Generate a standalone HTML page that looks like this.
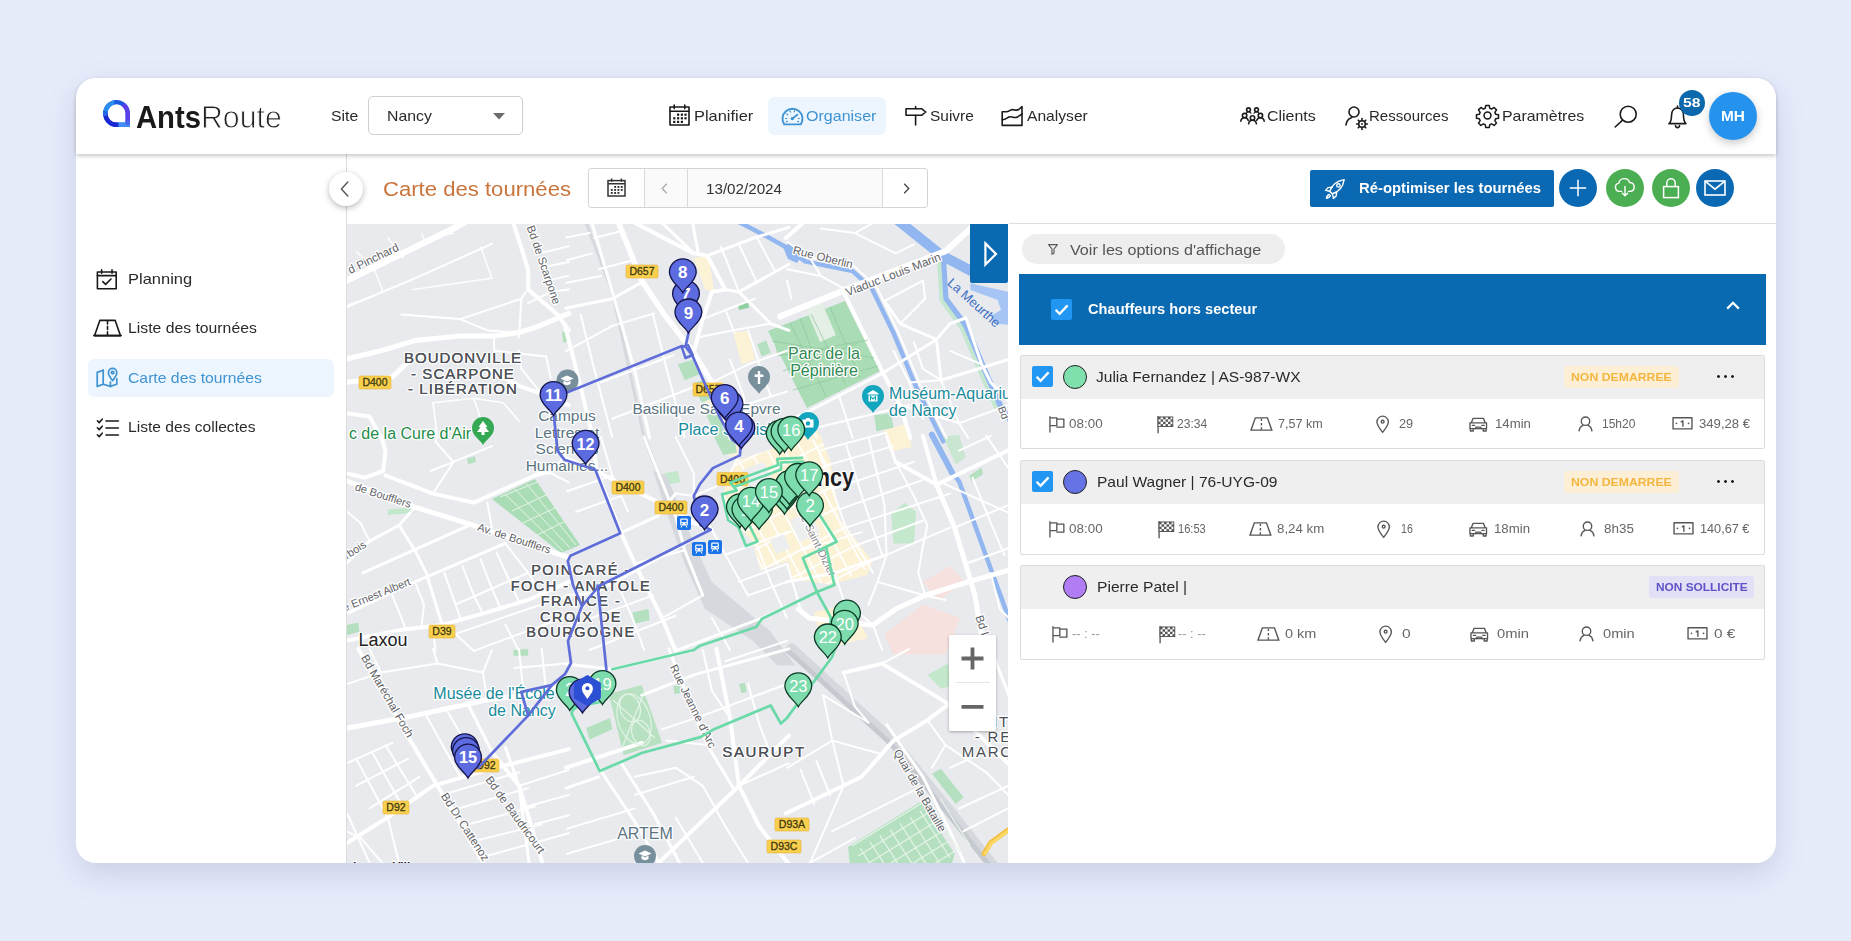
<!DOCTYPE html>
<html lang="fr"><head><meta charset="utf-8"><title>AntsRoute - Carte des tournées</title>
<style>
*{box-sizing:border-box;margin:0;padding:0}
html,body{width:1851px;height:941px;overflow:hidden}
body{font-family:"Liberation Sans",sans-serif;background:#e7ecfb;position:relative;color:#222}
.abs,.t,svg.i{position:absolute}
.t{white-space:nowrap;line-height:20px;height:20px;transform-origin:0 50%;display:block}
.card{left:76px;top:78px;width:1700px;height:785px;border-radius:20px;background:#fff;box-shadow:0 11px 30px rgba(105,118,155,.23)}
.hdr{left:76px;top:78px;width:1700px;height:76px;border-radius:20px 20px 0 0;background:#fff;box-shadow:0 2px 4px rgba(0,0,0,.22)}
svg.i{overflow:visible}
.k{fill:none;stroke:#1a1a1a;stroke-width:1.6;stroke-linecap:round;stroke-linejoin:round}
.g{fill:none;stroke:#555;stroke-width:1.4;stroke-linecap:round;stroke-linejoin:round}
.circ{border-radius:50%}
</style></head><body>

<div class="abs card"></div>
<!-- sidebar border -->
<div class="abs" style="left:346px;top:154px;width:1px;height:709px;background:#dcdcdc"></div>
<!-- toolbar bottom line (right part) -->
<div class="abs" style="left:1009px;top:223px;width:767px;height:1px;background:#dedede"></div>

<!-- ===== HEADER ===== -->
<div class="abs hdr"></div>
<!-- logo -->
<svg class="i" style="left:103px;top:100.4px" width="26.8" height="26.9" viewBox="0 0 28.6 28" preserveAspectRatio="none">
 <path d="M14.3 2.2 A11.8 11.8 0 1 0 14.3 25.8 L26.4 25.8 L26.4 14 A11.9 11.9 0 0 0 14.3 2.2 Z" fill="none" stroke="#1d5ae0" stroke-width="4.6" stroke-linejoin="miter"/>
 <path d="M2.5 14 A11.8 11.8 0 0 1 12 2.4" fill="none" stroke="#2b8ff2" stroke-width="4.6"/>
 <path d="M2.5 13.2 A11.8 11.8 0 0 0 14.3 25.8 L16.5 25.8" fill="none" stroke="#1b28d4" stroke-width="4.6"/>
 <path d="M2.4 11.2 A11.800 11.800 0 0 0 2.700 16.500" fill="none" stroke="#2468e6" stroke-width="4.600"/>
 <path d="M21.5 4.6 A11.9 11.9 0 0 1 26.4 14 L26.4 23" fill="none" stroke="#5b3fe8" stroke-width="4.6"/>
 <path d="M16.5 25.8 L28.7 25.8" fill="none" stroke="#3f8cf6" stroke-width="4.6"/>
 <path d="M26.4 21 L26.4 25.800" fill="none" stroke="#4b62ee" stroke-width="4.600"/>
</svg>
<!-- site select -->
<div class="abs" style="left:368px;top:96px;width:155px;height:39px;border:1px solid #cfcfcf;border-radius:5px;background:#fff"></div>
<svg class="i" style="left:493px;top:113px" width="12" height="7" viewBox="0 0 12 7"><path d="M0 0h12L6 6.5z" fill="#6b6b6b"/></svg>

<!-- Planifier icon (calendar) -->
<svg class="i" style="left:669px;top:104px" width="21" height="22" viewBox="0 0 21 22">
 <rect x="1" y="3" width="19" height="18" class="k" stroke-width="1.8"/>
 <path d="M1 7.2h19M5.2 1v3.6M15.8 1v3.6" class="k" stroke-width="1.8"/>
 <g fill="#1a1a1a"><rect x="8" y="9.6" width="2.2" height="2.2"/><rect x="11.8" y="9.6" width="2.2" height="2.2"/><rect x="15.4" y="9.6" width="2.2" height="2.2"/>
 <rect x="4.2" y="13.2" width="2.2" height="2.2"/><rect x="8" y="13.2" width="2.2" height="2.2"/><rect x="11.8" y="13.2" width="2.2" height="2.2"/><rect x="15.4" y="13.2" width="2.2" height="2.2"/>
 <rect x="4.2" y="16.8" width="2.2" height="2.2"/><rect x="8" y="16.8" width="2.2" height="2.2"/><rect x="11.8" y="16.8" width="2.2" height="2.2"/></g>
</svg>
<!-- Organiser pill -->
<div class="abs" style="left:768px;top:97px;width:118px;height:38px;border-radius:6px;background:#edf6fe"></div>
<svg class="i" style="left:781px;top:106px" width="23" height="20" viewBox="0 0 23 20">
 <path d="M3.2 18.4 A10 10 0 1 1 19.8 18.4 Z" fill="none" stroke="#3f93d2" stroke-width="1.9" stroke-linejoin="round"/>
 <path d="M11.5 12.4 L16.3 8.8" stroke="#3f93d2" stroke-width="1.9" stroke-linecap="round"/>
 <circle cx="11.3" cy="12.6" r="1.7" fill="#3f93d2"/>
 <g stroke="#3f93d2" stroke-width="1.2" stroke-linecap="round"><path d="M4.6 12.5h1.2M5.8 8l1 .7M9 4.9l.5 1.1M13.6 4.8l-.4 1.1M18.4 12.5h-1.2M17.6 15.8l-1-.4M5.4 15.8l1-.4"/></g>
</svg>
<!-- Suivre icon (signpost) -->
<svg class="i" style="left:905px;top:106px" width="23" height="20" viewBox="0 0 23 20">
 <path d="M1 2.8h15.8l4 3.2-4 3.2H1z" class="k" stroke-width="1.8" stroke-linejoin="miter"/>
 <path d="M10.6 0.6v2M10.6 9.4v9.6" class="k" stroke-width="1.8"/>
</svg>
<!-- Analyser icon -->
<svg class="i" style="left:1001px;top:105px" width="23" height="22" viewBox="0 0 23 22">
 <path d="M1.2 8.2v12.2h19.8V1.6l-3.3 2.9c-2.6 2-5.2-1-8 .6-1.7 1-2.8 1.6-3.9 1.6H1.200z" class="k" stroke-width="1.8" stroke-linejoin="miter"/>
 <path d="M1.2 14.6c2.6.6 4.500-1.6 6.7-2.600 3-1.400 5.300 1.700 8 .2 1.800-1 3.300-2.200 5.100-3.200" class="k" stroke-width="1.8"/>
</svg>
<!-- Clients icon -->
<svg class="i" style="left:1240px;top:107px" width="25" height="18" viewBox="0 0 25 18">
 <g class="k" stroke-width="1.4">
 <circle cx="8.5" cy="2.800" r="1.900"/><circle cx="16.5" cy="2.800" r="1.900"/>
 <circle cx="4.600" cy="8.600" r="2.200"/><path d="M0.800 14.200c.4-2.300 1.900-3.400 3.800-3.400s3.100.9 3.600 2.400"/>
 <circle cx="20.400" cy="8.600" r="2.200"/><path d="M24.200 14.200c-.4-2.300-1.900-3.400-3.800-3.400s-3.100.9-3.600 2.400"/>
 <circle cx="12.500" cy="11" r="2.200"/><path d="M8.600 16.800c.4-2.300 2-3.500 3.900-3.500s3.500 1.200 3.900 3.500"/>
 <path d="M6 6.200c.5-.9 1.400-1.400 2.500-1.400s2 .5 2.500 1.400M14 6.200c.5-.9 1.400-1.400 2.500-1.400s2 .5 2.500 1.400" stroke-width="1.200"/>
 </g>
</svg>
<!-- Ressources icon -->
<svg class="i" style="left:1345px;top:106px" width="25" height="24" viewBox="0 0 25 24">
 <circle cx="9" cy="6" r="5" class="k" stroke-width="1.5"/>
 <path d="M1 19c.4-4 2.800-6.600 5.800-7.600" class="k" stroke-width="1.500"/>
 <circle cx="17" cy="18" r="3.300" class="k" stroke-width="1.500"/><circle cx="17" cy="18" r="0.900" fill="#1a1a1a"/>
 <g stroke="#1a1a1a" stroke-width="1.600" stroke-linecap="round"><path d="M17 12.600v1.600M17 21.800v1.600M11.600 18h1.600M20.800 18h1.600M13.200 14.200l1.100 1.100M19.700 20.700l1.100 1.100M13.200 21.800l1.100-1.100M19.700 15.300l1.100-1.100"/></g>
</svg>
<!-- Parametres gear -->
<svg class="i" style="left:1476px;top:104px" width="23" height="23" viewBox="0 0 24 24">
 <path class="k" stroke-width="1.900" d="M10.200 1.500h3.600l.6 3 1.900.8 2.600-1.700 2.500 2.500-1.700 2.600.8 1.900 3 .6v3.600l-3 .6-.8 1.900 1.700 2.600-2.500 2.500-2.600-1.700-1.900.8-.6 3h-3.600l-.6-3-1.900-.8-2.600 1.700-2.500-2.500 1.700-2.600-.8-1.900-3-.6v-3.600l3-.6.8-1.900-1.700-2.600 2.500-2.500 2.600 1.700 1.900-.8z"/>
 <circle cx="12" cy="12" r="3.600" class="k" stroke-width="1.900"/>
</svg>
<!-- search -->
<svg class="i" style="left:1614px;top:105px" width="24" height="23" viewBox="0 0 24 23">
 <circle cx="14.200" cy="9.200" r="8" class="k" stroke-width="1.700"/><path d="M8.600 15.200L1.200 22" class="k" stroke-width="1.700"/>
</svg>
<!-- bell -->
<svg class="i" style="left:1668px;top:105px" width="19" height="24" viewBox="0 0 19 24">
 <path d="M1 18.600h17c-2-1.800-2.500-3.400-2.500-8.200 0-4.400-2.400-7.400-6-7.400s-6 3-6 7.400c0 4.800-.5 6.400-2.500 8.200z" class="k" stroke-width="1.700"/>
 <path d="M9.500 1v2M7.500 20.600a2 2 0 0 0 4 0" class="k" stroke-width="1.700"/>
</svg>
<div class="abs circ" style="left:1679px;top:90px;width:26px;height:26px;background:#0b68ad"></div>
<!-- avatar -->
<div class="abs circ" style="left:1709px;top:92px;width:48px;height:48px;background:#2593ee;box-shadow:0 3px 8px rgba(0,0,0,.22)"></div>

<!-- ===== SIDEBAR ===== -->
<div class="abs" style="left:88px;top:359px;width:246px;height:38px;border-radius:6px;background:#edf6fe"></div>
<!-- planning icon -->
<svg class="i" style="left:96px;top:269px" width="22" height="21" viewBox="0 0 22 21">
 <rect x="1.400" y="3" width="18.800" height="16.800" class="k" stroke-width="1.800" stroke-linejoin="miter"/>
 <path d="M1.400 6.600h18.800M5.600 0.900v3.300M16 0.900v3.300" class="k" stroke-width="1.800"/>
 <path d="M6.800 12.600l2.800 2.800 5.400-5.400" class="k" stroke-width="1.800"/>
</svg>
<!-- road icon -->
<svg class="i" style="left:93px;top:319px" width="29" height="18" viewBox="0 0 29 18">
 <path d="M6.800 1.400h15.400l5.200 15.200H1.600z" class="k" stroke-width="1.800" stroke-linejoin="miter"/>
 <path d="M0.800 16.600h27.400" class="k" stroke-width="1.800"/>
 <path d="M14.500 2.400v2.600M14.500 7.400v3M14.500 12.800v3" class="k" stroke-width="1.800" stroke-linecap="butt"/>
</svg>
<!-- map icon (active) -->
<svg class="i" style="left:96px;top:366px" width="23" height="22" viewBox="0 0 23 22">
 <g fill="none" stroke="#3f93d2" stroke-width="1.700" stroke-linejoin="round" stroke-linecap="round">
 <path d="M7.200 4.200L1.200 6.400v14l6-2.200 7.200 2.200 6.400-2.200v-5.400"/>
 <path d="M7.200 4.200v14"/><path d="M14.400 16v4.400" />
 <path d="M16.600 14.600c-2.600-3-4.200-5.600-4.200-8a4.200 4.200 0 0 1 8.400 0c0 2.400-1.600 5-4.200 8z"/>
 <circle cx="16.600" cy="6.600" r="1.300"/>
 </g>
</svg>
<!-- checklist icon -->
<svg class="i" style="left:96px;top:418px" width="23" height="20" viewBox="0 0 23 20">
 <g class="k" stroke-width="1.900" stroke-linecap="butt"><path d="M10 3h12.400M10 10h12.400M10 17h12.400"/></g>
 <g class="k" stroke-width="1.800"><path d="M1.400 2.800l1.800 1.800 3-3.400M1.400 9.800l1.800 1.800 3-3.400M1.400 16.800l1.800 1.800 3-3.400"/></g>
</svg>

<!-- ===== TOOLBAR ===== -->
<div class="abs circ" style="left:329px;top:172px;width:34px;height:34px;background:#fff;box-shadow:0 2px 6px rgba(0,0,0,.28)"></div>
<svg class="i" style="left:340px;top:181px" width="9" height="16" viewBox="0 0 9 16"><path d="M7.800 1L1.400 8l6.400 7" class="g" stroke="#555" stroke-width="1.500"/></svg>
<!-- date group -->
<div class="abs" style="left:588px;top:168px;width:340px;height:40px;border:1px solid #d4d4d4;border-radius:3px;background:#fff"></div>
<div class="abs" style="left:644px;top:169px;width:239px;height:38px;background:#fafafa;border-left:1px solid #d9d9d9;border-right:1px solid #d9d9d9"></div>
<div class="abs" style="left:687px;top:169px;width:1px;height:38px;background:#d9d9d9"></div>
<svg class="i" style="left:607px;top:178px" width="19" height="19" viewBox="0 0 19 19">
 <rect x="1" y="2.600" width="17" height="15.400" fill="none" stroke="#333" stroke-width="1.500"/>
 <path d="M1 5.800h17M4.600 0.600v3.200M14.400 0.600v3.200" stroke="#333" stroke-width="1.500" fill="none"/>
 <g fill="#333"><rect x="7.200" y="8" width="1.900" height="1.900"/><rect x="10.500" y="8" width="1.900" height="1.900"/><rect x="13.800" y="8" width="1.900" height="1.900"/>
 <rect x="3.800" y="11" width="1.900" height="1.900"/><rect x="7.200" y="11" width="1.900" height="1.900"/><rect x="10.500" y="11" width="1.900" height="1.900"/><rect x="13.800" y="11" width="1.900" height="1.900"/>
 <rect x="3.800" y="14" width="1.900" height="1.900"/><rect x="7.200" y="14" width="1.900" height="1.900"/><rect x="10.500" y="14" width="1.900" height="1.900"/></g>
</svg>
<svg class="i" style="left:661px;top:183px" width="7" height="11" viewBox="0 0 7 11"><path d="M5.800 0.800L1.200 5.500l4.600 4.700" fill="none" stroke="#aaa" stroke-width="1.300"/></svg>
<svg class="i" style="left:903px;top:183px" width="7" height="11" viewBox="0 0 7 11"><path d="M1.200 0.800L5.800 5.500l-4.600 4.700" fill="none" stroke="#444" stroke-width="1.300"/></svg>

<!-- re-optimiser button -->
<div class="abs" style="left:1310px;top:170px;width:244px;height:37px;border-radius:2px;background:#0a69b2"></div>
<svg class="i" style="left:1324px;top:178px" width="22" height="22" viewBox="0 0 22 22">
 <g fill="none" stroke="#fff" stroke-width="1.400" stroke-linejoin="round" stroke-linecap="round">
 <path d="M8.200 15.800l-2.400-2.400c1.800-5.800 6-10.400 14.400-11.800-1.400 8.400-6 12.600-12 14.200z"/>
 <path d="M8.400 9.200L4 9.600 1.600 12.400l4 .8M12.600 13.600l-.4 4.400-2.800 2.400-.8-4"/>
 <circle cx="14.400" cy="7.400" r="1.700"/>
 <path d="M5.400 16.400c-1.400.4-2.600 1.800-3 4 2.200-.4 3.600-1.600 4-3"/>
 </g>
</svg>
<div class="abs circ" style="left:1559px;top:169px;width:38px;height:38px;background:#0a69b2"></div>
<svg class="i" style="left:1569px;top:179px" width="18" height="18" viewBox="0 0 18 18"><path d="M9 0.800v16.400M0.800 9h16.400" stroke="#fff" stroke-width="1.500" fill="none"/></svg>
<div class="abs circ" style="left:1606px;top:169px;width:38px;height:38px;background:#4cae52"></div>
<svg class="i" style="left:1614px;top:178px" width="22" height="20" viewBox="0 0 22 20">
 <g fill="none" stroke="#fff" stroke-width="1.400" stroke-linecap="round" stroke-linejoin="round">
 <path d="M7.600 13.400H5.400a4.200 4.200 0 0 1-.6-8.300 5.600 5.600 0 0 1 10.800-.6 4.500 4.500 0 0 1 1 8.900h-2.200"/>
 <path d="M11 8.400v9.200M8.400 15.200L11 17.800l2.600-2.600"/></g>
</svg>
<div class="abs circ" style="left:1652px;top:169px;width:38px;height:38px;background:#4cae52"></div>
<svg class="i" style="left:1662px;top:177px" width="18" height="22" viewBox="0 0 18 22">
 <g fill="none" stroke="#fff" stroke-width="1.500" stroke-linejoin="miter"><rect x="1.600" y="9.600" width="14.800" height="11"/><path d="M4.800 9.600V6a4.200 4.200 0 0 1 8.400 0v3.600"/></g>
</svg>
<div class="abs circ" style="left:1696px;top:169px;width:38px;height:38px;background:#0a69b2"></div>
<svg class="i" style="left:1704px;top:180px" width="22" height="16" viewBox="0 0 22 16">
 <g fill="none" stroke="#fff" stroke-width="1.600" stroke-linejoin="miter"><rect x="1" y="1" width="20" height="14"/><path d="M1.400 1.400L11 9.200l9.600-7.800"/></g>
</svg>

<!-- ===== MAP ===== -->
<svg class="i" id="map" style="left:347px;top:224px;overflow:hidden" width="661" height="639" viewBox="347 224 661 639" font-family="Liberation Sans, sans-serif"><defs><filter id="zs" x="-20%" y="-10%" width="140%" height="120%"><feDropShadow dx="0" dy="1" stdDeviation="1.500" flood-color="#000" flood-opacity=".3"/></filter></defs><rect x="347" y="224" width="661" height="639" fill="#e8eaed"/>
<path d="M736.8 460.4 L778.0 447.0 L820.9 437.0 L830.3 460.4 L839.6 518.8 L872.4 560.9 L867.7 575.0 L830.3 584.3 L792.9 579.6 L788.2 560.9 L760.1 570.3 L753.1 542.2 L732.1 518.8 L722.7 495.5 L729.7 472.1Z" fill="#fcf2d5" />
<path d="M884.0 430.0 L905.0 424.0 L912.0 447.0 L890.0 452.0Z" fill="#fcf2d5" />
<path d="M814.0 612.0 L850.0 604.0 L868.0 638.0 L835.0 646.0 L820.0 636.0Z" fill="#fcf2d5" />
<path d="M693.8 258.0 L708.5 254.6 L714.1 291.9 L705.1 289.6Z" fill="#fcf2d5" />
<path d="M733.4 332.6 L748.1 330.4 L754.9 359.8 L741.3 364.3Z" fill="#fcf2d5" />
<path d="M780.0 437.0 L815.0 428.0 L822.0 437.0 L790.0 447.0Z" fill="#fcf2d5" />
<path d="M700.0 388.0 L722.0 380.0 L745.0 440.0 L736.0 460.0 L722.0 450.0Z" fill="#f6f0dc" />
<path d="M922.9 581.9 L950.0 566.1 L964.8 581.9 L938.7 600.5Z" fill="#f7e1df" />
<path d="M884.4 634.0 L922.9 604.6 L960.2 618.2 L945.5 654.4 L893.4 654.4Z" fill="#f7e1df" />
<path d="M768.0 331.0 L845.0 301.0 L880.0 371.0 L807.0 408.0Z" fill="#aadcb6" />
<path d="M806.0 309.0 L822.0 303.0 L836.0 335.0 L820.0 342.0Z" fill="#e4efe6" />
<path d="M492.0 499.0 L535.0 479.0 L580.0 545.0 L561.0 553.0Z" fill="#aadcb6" />
<path d="M608.9 694.1 L641.7 685.1 L662.1 742.8 L623.6 755.3Z" fill="#b7e1c1" />
<path d="M586.2 728.1 L610.0 717.9 L612.3 729.2 L589.6 739.4Z" fill="#b4e0bf" />
<path d="M848.1 847.0 L920.6 801.7 L954.6 853.8 L950.0 871.9 L850.4 871.9Z" fill="#b4e0bf" />
<path d="M931.9 773.4 L941.0 768.9 L963.6 797.2 L955.7 804.0Z" fill="#b4e0bf" />
<path d="M927.4 674.9 L947.8 663.6 L951.2 686.2 L941.0 688.5Z" fill="#c3e8cb" />
<path d="M891.2 514.0 L904.8 502.7 L916.1 511.7 L913.8 543.4 L893.4 543.4Z" fill="#c3e8cb" />
<path d="M714.1 437.0 L733.4 432.5 L736.8 452.8 L723.2 455.1Z" fill="#b4e0bf" />
<path d="M677.9 364.3 L692.6 359.8 L699.4 374.5 L684.7 380.2Z" fill="#b4e0bf" />
<path d="M692.6 383.6 L702.8 380.2 L711.9 398.3 L701.7 402.8Z" fill="#b4e0bf" />
<path d="M705.1 411.9 L716.4 407.3 L730.0 437.0 L716.4 437.0Z" fill="#b4e0bf" />
<path d="M771.8 330.4 L787.0 323.6 L787.0 350.8 L777.5 355.3Z" fill="#aadcb6" />
<path d="M757.1 344.0 L766.2 340.6 L770.7 353.0 L761.7 356.4Z" fill="#b4e0bf" />
<path d="M737.9 304.4 L748.1 302.1 L749.2 307.7 L739.0 310.0Z" fill="#8fd0a0" />
<path d="M562.0 332.6 L567.0 330.4 L567.0 341.7 L563.2 342.8Z" fill="#b4e0bf" />
<path d="M632.6 612.4 L648.5 609.0 L649.6 620.3 L633.8 623.7Z" fill="#b4e0bf" />
<path d="M467.0 458.5 L474.9 456.2 L476.0 461.9 L468.1 464.2Z" fill="#b4e0bf" />
<path d="M387.7 509.4 L412.6 507.2 L413.8 512.8 L387.7 515.1Z" fill="#c3e8cb" />
<path d="M347.0 624.9 L358.3 622.6 L359.4 631.7 L347.0 635.1Z" fill="#b4e0bf" />
<path d="M874.2 415.3 L891.2 413.1 L893.4 427.8 L876.4 431.2Z" fill="#b4e0bf" />
<path d="M969.3 475.5 L981.7 467.6 L982.9 474.4 L971.6 481.2Z" fill="#b4e0bf" />
<path d="M943.2 437.0 L959.1 434.7 L965.9 457.4 L955.7 464.2Z" fill="#c9e6d0" />
<path d="M664.3 473.2 L677.9 471.0 L680.2 482.3 L666.6 484.5Z" fill="#c3e8cb" />
<path d="M673.4 686.2 L680.2 685.1 L681.3 693.0 L674.5 694.1Z" fill="#b4e0bf" />
<path d="M739.0 684.0 L744.7 682.8 L746.9 691.9 L741.3 693.0Z" fill="#b4e0bf" />
<path d="M513.4 650.0 L528.1 648.9 L528.1 655.7 L513.4 655.7Z" fill="#b4e0bf" />
<path d="M895 218L941 255L975 273" fill="none" stroke="#92b6f0" stroke-width="10" stroke-linejoin="round"/>
<path d="M783.0 247.0 L790.0 243.0 L801.0 257.0 L797.0 263.0 L788.0 259.0Z" fill="#92b6f0" />
<path d="M970.4 283.3 L1008.9 291.9 L1008.9 324.8 L994.2 323.6 L990.8 315.7 L1001.0 310.1 L997.6 299.9 L970.4 290.1Z" fill="#a6c5f4" />
<path d="M738.3 221.7 L768.9 237.6 L787.0 247.8 L805.1 261.4 L852.7 271.1 L871.9 288.5 L893.4 332.7 L916.1 387.0 L943.2 441.4" fill="none" stroke="#92b6f0" stroke-width="4.5" stroke-linejoin="round" stroke-linecap="round" />
<path d="M943.2 260.2 L945.5 298.7 L965.9 325.9 L984.0 368.9 L999.9 405.2 L1011.2 421.0" fill="none" stroke="#92b6f0" stroke-width="6" stroke-linejoin="round" stroke-linecap="round" />
<path d="M939.2 262.5 L941.4 299.9 L961.8 328.2 L979.9 371.2 L995.8 407.4" fill="none" stroke="#c5e6cf" stroke-width="4" stroke-linejoin="round" stroke-linecap="round" />
<path d="M931.9 434.7 L952.3 473.2" fill="none" stroke="#92b6f0" stroke-width="6" stroke-linejoin="round" stroke-linecap="round" />
<path d="M952.3 473.2 L959.1 481.2 L984.0 550.2 L1011.2 625.0" fill="none" stroke="#92b6f0" stroke-width="4.5" stroke-linejoin="round" stroke-linecap="round" />
<path d="M586.2 222.9 L612.3 291.9 L644.0 437.0" fill="none" stroke="#d5d8dd" stroke-width="3" stroke-linejoin="round" stroke-linecap="round" />
<path d="M644.0 437.0 L662.1 482.3 L684.7 550.2" fill="none" stroke="#d5d8dd" stroke-width="4" stroke-linejoin="round" stroke-linecap="round" />
<path d="M653.0 471.0 L666.6 475.5 L693.8 543.4 L711.9 581.9 L770.7 631.7 L787.0 654.3 L795.6 665.6 L777.5 665.6 L752.6 640.7 L705.1 609.0 L684.7 563.8 L673.4 532.1Z" fill="#d5d8dd" />
<path d="M791.5 647.7 L893.4 740.6 L952.3 813.0 L995.3 867.4" fill="none" stroke="#d5d8dd" stroke-width="9" stroke-linejoin="round" stroke-linecap="round" />
<path d="M787.0 650.0 L891.2 744.0 L950.0 816.4 L990.8 867.4" fill="none" stroke="#c6c9cf" stroke-width="5" stroke-linejoin="round" stroke-linecap="round" />
<path d="M412.6 289.6 L491.9 278.3 L480.5 246.6" fill="none" stroke="#fff" stroke-width="1.4" stroke-linejoin="round" stroke-linecap="round"/>
<path d="M374.2 269.3 L383.2 291.9 L347.0 305.5" fill="none" stroke="#fff" stroke-width="1.4" stroke-linejoin="round" stroke-linecap="round"/>
<path d="M356.1 251.2 L374.2 269.3" fill="none" stroke="#fff" stroke-width="1.4" stroke-linejoin="round" stroke-linecap="round"/>
<path d="M387.7 237.6 L403.6 258.0" fill="none" stroke="#fff" stroke-width="1.4" stroke-linejoin="round" stroke-linecap="round"/>
<path d="M421.7 233.1 L424.0 239.8 L453.4 233.1" fill="none" stroke="#fff" stroke-width="1.4" stroke-linejoin="round" stroke-linecap="round"/>
<path d="M433.0 402.8 L437.5 437.9" fill="none" stroke="#fff" stroke-width="1.6" stroke-linejoin="round" stroke-linecap="round"/>
<path d="M433.0 402.8 L473.8 398.3 L487.3 437.9" fill="none" stroke="#fff" stroke-width="1.6" stroke-linejoin="round" stroke-linecap="round"/>
<path d="M473.8 398.3 L503.2 402.8 L519.0 420.9" fill="none" stroke="#fff" stroke-width="1.6" stroke-linejoin="round" stroke-linecap="round"/>
<path d="M345.9 307.3 L414.9 278.3 L491.9 243.9" fill="none" stroke="#fff" stroke-width="2" stroke-linejoin="round" stroke-linecap="round"/>
<path d="M401.3 314.5 L460.2 319.1 L487.3 330.4 L519.0 332.6" fill="none" stroke="#fff" stroke-width="2" stroke-linejoin="round" stroke-linecap="round"/>
<path d="M460.2 319.1 L521.3 298.7 L525.8 291.9" fill="none" stroke="#fff" stroke-width="2" stroke-linejoin="round" stroke-linecap="round"/>
<path d="M521.3 298.7 L519.0 337.2" fill="none" stroke="#fff" stroke-width="2" stroke-linejoin="round" stroke-linecap="round"/>
<path d="M494.1 337.2 L494.1 350.8 L546.2 356.4" fill="none" stroke="#fff" stroke-width="2" stroke-linejoin="round" stroke-linecap="round"/>
<path d="M539.4 253.4 L568.8 246.2" fill="none" stroke="#fff" stroke-width="2" stroke-linejoin="round" stroke-linecap="round"/>
<path d="M543.9 267.0 L568.8 262.0" fill="none" stroke="#fff" stroke-width="2" stroke-linejoin="round" stroke-linecap="round"/>
<path d="M548.4 280.6 L568.8 275.6" fill="none" stroke="#fff" stroke-width="2" stroke-linejoin="round" stroke-linecap="round"/>
<path d="M528.1 303.2 L550.7 291.9 L568.8 289.6" fill="none" stroke="#fff" stroke-width="2" stroke-linejoin="round" stroke-linecap="round"/>
<path d="M519.0 350.8 L521.3 368.9 L541.7 393.8" fill="none" stroke="#fff" stroke-width="2" stroke-linejoin="round" stroke-linecap="round"/>
<path d="M546.2 356.4 L550.7 377.9" fill="none" stroke="#fff" stroke-width="2" stroke-linejoin="round" stroke-linecap="round"/>
<path d="M567.0 260.2 L591.9 253.4" fill="none" stroke="#fff" stroke-width="2" stroke-linejoin="round" stroke-linecap="round"/>
<path d="M594.2 238.0 L622.5 230.8" fill="none" stroke="#fff" stroke-width="2" stroke-linejoin="round" stroke-linecap="round"/>
<path d="M565.9 237.6 L589.6 233.1" fill="none" stroke="#fff" stroke-width="2" stroke-linejoin="round" stroke-linecap="round"/>
<path d="M598.7 269.3 L632.6 260.2" fill="none" stroke="#fff" stroke-width="2" stroke-linejoin="round" stroke-linecap="round"/>
<path d="M565.9 351.2 L612.3 325.9 L654.1 313.4" fill="none" stroke="#fff" stroke-width="2" stroke-linejoin="round" stroke-linecap="round"/>
<path d="M565.9 282.9 L601.0 276.1" fill="none" stroke="#fff" stroke-width="2" stroke-linejoin="round" stroke-linecap="round"/>
<path d="M621.3 323.6 L634.9 371.1" fill="none" stroke="#fff" stroke-width="2" stroke-linejoin="round" stroke-linecap="round"/>
<path d="M580.6 314.5 L594.2 368.9 L612.3 437.0" fill="none" stroke="#fff" stroke-width="2" stroke-linejoin="round" stroke-linecap="round"/>
<path d="M601.0 382.4 L673.4 355.3" fill="none" stroke="#fff" stroke-width="2" stroke-linejoin="round" stroke-linecap="round"/>
<path d="M612.3 418.7 L693.8 387.0" fill="none" stroke="#fff" stroke-width="2" stroke-linejoin="round" stroke-linecap="round"/>
<path d="M653.0 314.5 L666.6 368.9 L684.7 437.0" fill="none" stroke="#fff" stroke-width="2" stroke-linejoin="round" stroke-linecap="round"/>
<path d="M720.9 246.6 L739.0 291.9" fill="none" stroke="#fff" stroke-width="2" stroke-linejoin="round" stroke-linecap="round"/>
<path d="M739.0 244.4 L757.1 282.9" fill="none" stroke="#fff" stroke-width="2" stroke-linejoin="round" stroke-linecap="round"/>
<path d="M757.1 237.6 L775.2 271.5" fill="none" stroke="#fff" stroke-width="2" stroke-linejoin="round" stroke-linecap="round"/>
<path d="M702.8 319.1 L725.4 310.0 L754.9 298.7" fill="none" stroke="#fff" stroke-width="2" stroke-linejoin="round" stroke-linecap="round"/>
<path d="M698.3 337.2 L732.2 330.4 L770.7 323.6" fill="none" stroke="#fff" stroke-width="2" stroke-linejoin="round" stroke-linecap="round"/>
<path d="M725.4 310.0 L734.5 332.6" fill="none" stroke="#fff" stroke-width="2" stroke-linejoin="round" stroke-linecap="round"/>
<path d="M748.1 330.4 L759.4 364.3 L770.7 396.0" fill="none" stroke="#fff" stroke-width="2" stroke-linejoin="round" stroke-linecap="round"/>
<path d="M711.9 382.4 L748.1 364.3 L787.0 350.8" fill="none" stroke="#fff" stroke-width="2" stroke-linejoin="round" stroke-linecap="round"/>
<path d="M730.0 359.8 L743.6 396.0 L748.1 427.7" fill="none" stroke="#fff" stroke-width="2" stroke-linejoin="round" stroke-linecap="round"/>
<path d="M723.2 411.9 L787.0 391.5" fill="none" stroke="#fff" stroke-width="2" stroke-linejoin="round" stroke-linecap="round"/>
<path d="M787.0 241.7 L809.6 257.5 L854.9 266.6 L877.6 288.5 L898.4 332.7 L921.1 387.0 L946.6 438.0" fill="none" stroke="#fff" stroke-width="2" stroke-linejoin="round" stroke-linecap="round"/>
<path d="M787.0 269.3 L821.0 276.1 L845.9 289.7" fill="none" stroke="#fff" stroke-width="2" stroke-linejoin="round" stroke-linecap="round"/>
<path d="M809.6 257.5 L821.0 276.1" fill="none" stroke="#fff" stroke-width="2" stroke-linejoin="round" stroke-linecap="round"/>
<path d="M791.5 298.7 L787.0 280.6" fill="none" stroke="#fff" stroke-width="2" stroke-linejoin="round" stroke-linecap="round"/>
<path d="M884.4 301.0 L922.9 280.6" fill="none" stroke="#fff" stroke-width="2" stroke-linejoin="round" stroke-linecap="round"/>
<path d="M900.2 323.6 L925.1 298.7 L922.9 280.6" fill="none" stroke="#fff" stroke-width="2" stroke-linejoin="round" stroke-linecap="round"/>
<path d="M913.8 341.8 L922.9 368.9 L941.0 380.2" fill="none" stroke="#fff" stroke-width="2" stroke-linejoin="round" stroke-linecap="round"/>
<path d="M909.3 382.5 L941.0 380.2" fill="none" stroke="#fff" stroke-width="2" stroke-linejoin="round" stroke-linecap="round"/>
<path d="M950.0 350.8 L981.7 364.4" fill="none" stroke="#fff" stroke-width="2" stroke-linejoin="round" stroke-linecap="round"/>
<path d="M941.0 380.2 L959.1 423.3 L968.2 438.0" fill="none" stroke="#fff" stroke-width="2" stroke-linejoin="round" stroke-linecap="round"/>
<path d="M900.2 405.2 L959.1 423.3 L1008.0 405.2" fill="none" stroke="#fff" stroke-width="2" stroke-linejoin="round" stroke-linecap="round"/>
<path d="M807.4 412.0 L816.4 438.0" fill="none" stroke="#fff" stroke-width="2" stroke-linejoin="round" stroke-linecap="round"/>
<path d="M839.1 396.1 L852.7 438.0" fill="none" stroke="#fff" stroke-width="2" stroke-linejoin="round" stroke-linecap="round"/>
<path d="M816.4 427.8 L909.3 405.2" fill="none" stroke="#fff" stroke-width="2" stroke-linejoin="round" stroke-linecap="round"/>
<path d="M893.4 350.8 L909.3 382.5 L922.9 418.7" fill="none" stroke="#fff" stroke-width="2" stroke-linejoin="round" stroke-linecap="round"/>
<path d="M854.9 233.1 L895.7 253.4 L913.8 244.4" fill="none" stroke="#fff" stroke-width="2" stroke-linejoin="round" stroke-linecap="round"/>
<path d="M821.0 228.5 L854.9 233.1 L873.1 222.9" fill="none" stroke="#fff" stroke-width="2" stroke-linejoin="round" stroke-linecap="round"/>
<path d="M433.0 493.6 L453.4 461.9 L435.3 441.5 L437.5 435.9" fill="none" stroke="#fff" stroke-width="2" stroke-linejoin="round" stroke-linecap="round"/>
<path d="M430.7 471.0 L453.4 461.9 L491.9 446.1" fill="none" stroke="#fff" stroke-width="2" stroke-linejoin="round" stroke-linecap="round"/>
<path d="M444.3 572.8 L455.6 604.5 L460.2 618.1" fill="none" stroke="#fff" stroke-width="2" stroke-linejoin="round" stroke-linecap="round"/>
<path d="M462.4 566.0 L473.8 595.4 L482.8 613.6" fill="none" stroke="#fff" stroke-width="2" stroke-linejoin="round" stroke-linecap="round"/>
<path d="M480.5 559.2 L491.9 588.7 L500.9 609.0" fill="none" stroke="#fff" stroke-width="2" stroke-linejoin="round" stroke-linecap="round"/>
<path d="M496.4 552.4 L510.0 581.9 L519.0 602.2" fill="none" stroke="#fff" stroke-width="2" stroke-linejoin="round" stroke-linecap="round"/>
<path d="M455.6 604.5 L528.1 572.8" fill="none" stroke="#fff" stroke-width="2" stroke-linejoin="round" stroke-linecap="round"/>
<path d="M505.4 543.4 L528.1 572.8 L541.7 595.4" fill="none" stroke="#fff" stroke-width="2" stroke-linejoin="round" stroke-linecap="round"/>
<path d="M487.3 502.6 L491.9 527.5" fill="none" stroke="#fff" stroke-width="2" stroke-linejoin="round" stroke-linecap="round"/>
<path d="M369.6 541.1 L360.6 523.0 L347.0 511.7" fill="none" stroke="#fff" stroke-width="2" stroke-linejoin="round" stroke-linecap="round"/>
<path d="M392.3 595.4 L405.9 629.4" fill="none" stroke="#fff" stroke-width="2" stroke-linejoin="round" stroke-linecap="round"/>
<path d="M414.9 581.9 L424.0 604.5 L421.7 624.9" fill="none" stroke="#fff" stroke-width="2" stroke-linejoin="round" stroke-linecap="round"/>
<path d="M455.6 633.9 L473.8 650.9" fill="none" stroke="#fff" stroke-width="2" stroke-linejoin="round" stroke-linecap="round"/>
<path d="M433.0 627.1 L435.3 650.9" fill="none" stroke="#fff" stroke-width="2" stroke-linejoin="round" stroke-linecap="round"/>
<path d="M505.4 624.9 L519.0 650.9" fill="none" stroke="#fff" stroke-width="2" stroke-linejoin="round" stroke-linecap="round"/>
<path d="M455.6 633.9 L528.1 609.0 L568.8 595.4" fill="none" stroke="#fff" stroke-width="2" stroke-linejoin="round" stroke-linecap="round"/>
<path d="M473.8 650.9 L568.8 615.8" fill="none" stroke="#fff" stroke-width="2" stroke-linejoin="round" stroke-linecap="round"/>
<path d="M534.9 475.5 L550.7 473.2 L568.8 482.3" fill="none" stroke="#fff" stroke-width="2" stroke-linejoin="round" stroke-linecap="round"/>
<path d="M550.7 473.2 L568.8 450.6" fill="none" stroke="#fff" stroke-width="2" stroke-linejoin="round" stroke-linecap="round"/>
<path d="M634.9 563.8 L684.7 550.2" fill="none" stroke="#fff" stroke-width="2" stroke-linejoin="round" stroke-linecap="round"/>
<path d="M662.1 618.1 L702.8 595.4" fill="none" stroke="#fff" stroke-width="2" stroke-linejoin="round" stroke-linecap="round"/>
<path d="M567.0 491.3 L612.3 475.5" fill="none" stroke="#fff" stroke-width="2" stroke-linejoin="round" stroke-linecap="round"/>
<path d="M576.1 511.7 L621.3 495.9" fill="none" stroke="#fff" stroke-width="2" stroke-linejoin="round" stroke-linecap="round"/>
<path d="M601.0 437.0 L612.3 475.5 L628.1 511.7" fill="none" stroke="#fff" stroke-width="2" stroke-linejoin="round" stroke-linecap="round"/>
<path d="M567.0 627.1 L653.0 595.4" fill="none" stroke="#fff" stroke-width="2" stroke-linejoin="round" stroke-linecap="round"/>
<path d="M589.6 650.0 L675.6 615.8" fill="none" stroke="#fff" stroke-width="2" stroke-linejoin="round" stroke-linecap="round"/>
<path d="M612.3 572.8 L632.6 618.1 L644.0 650.0" fill="none" stroke="#fff" stroke-width="2" stroke-linejoin="round" stroke-linecap="round"/>
<path d="M693.8 495.9 L711.9 529.8 L725.4 554.7 L748.1 595.4" fill="none" stroke="#fff" stroke-width="2" stroke-linejoin="round" stroke-linecap="round"/>
<path d="M725.4 554.7 L787.0 532.1" fill="none" stroke="#fff" stroke-width="2" stroke-linejoin="round" stroke-linecap="round"/>
<path d="M739.0 581.9 L787.0 563.8" fill="none" stroke="#fff" stroke-width="2" stroke-linejoin="round" stroke-linecap="round"/>
<path d="M748.1 595.4 L787.0 581.9" fill="none" stroke="#fff" stroke-width="2" stroke-linejoin="round" stroke-linecap="round"/>
<path d="M711.9 618.1 L730.0 650.0" fill="none" stroke="#fff" stroke-width="2" stroke-linejoin="round" stroke-linecap="round"/>
<path d="M693.8 495.9 L725.4 482.3 L739.0 455.1" fill="none" stroke="#fff" stroke-width="2" stroke-linejoin="round" stroke-linecap="round"/>
<path d="M675.6 493.6 L693.8 495.9" fill="none" stroke="#fff" stroke-width="2" stroke-linejoin="round" stroke-linecap="round"/>
<path d="M675.6 437.0 L693.8 473.2 L693.8 495.9" fill="none" stroke="#fff" stroke-width="2" stroke-linejoin="round" stroke-linecap="round"/>
<path d="M757.1 545.6 L770.7 581.9 L787.0 618.1" fill="none" stroke="#fff" stroke-width="2" stroke-linejoin="round" stroke-linecap="round"/>
<path d="M818.7 450.6 L886.6 432.5" fill="none" stroke="#fff" stroke-width="2" stroke-linejoin="round" stroke-linecap="round"/>
<path d="M823.2 466.4 L893.4 446.1" fill="none" stroke="#fff" stroke-width="2" stroke-linejoin="round" stroke-linecap="round"/>
<path d="M832.3 489.1 L913.8 461.9" fill="none" stroke="#fff" stroke-width="2" stroke-linejoin="round" stroke-linecap="round"/>
<path d="M839.1 509.5 L922.9 480.0" fill="none" stroke="#fff" stroke-width="2" stroke-linejoin="round" stroke-linecap="round"/>
<path d="M845.9 527.6 L950.0 493.6" fill="none" stroke="#fff" stroke-width="2" stroke-linejoin="round" stroke-linecap="round"/>
<path d="M854.9 545.7 L922.9 520.8" fill="none" stroke="#fff" stroke-width="2" stroke-linejoin="round" stroke-linecap="round"/>
<path d="M861.7 563.8 L886.6 554.8 L950.0 527.6" fill="none" stroke="#fff" stroke-width="2" stroke-linejoin="round" stroke-linecap="round"/>
<path d="M818.7 450.6 L845.9 527.6 L873.1 572.9" fill="none" stroke="#fff" stroke-width="2" stroke-linejoin="round" stroke-linecap="round"/>
<path d="M845.9 443.8 L864.0 502.7 L882.1 554.8" fill="none" stroke="#fff" stroke-width="2" stroke-linejoin="round" stroke-linecap="round"/>
<path d="M868.5 437.0 L884.4 504.9 L886.6 554.8 L877.6 581.9 L868.5 604.6" fill="none" stroke="#fff" stroke-width="2" stroke-linejoin="round" stroke-linecap="round"/>
<path d="M895.7 461.9 L913.8 495.9 L927.4 525.3 L922.9 545.7 L918.3 572.9 L925.1 595.5" fill="none" stroke="#fff" stroke-width="2" stroke-linejoin="round" stroke-linecap="round"/>
<path d="M941.0 482.3 L1008.9 512.9" fill="none" stroke="#fff" stroke-width="2" stroke-linejoin="round" stroke-linecap="round"/>
<path d="M954.6 527.6 L1008.9 504.9" fill="none" stroke="#fff" stroke-width="2" stroke-linejoin="round" stroke-linecap="round"/>
<path d="M965.9 563.8 L1008.9 548.0" fill="none" stroke="#fff" stroke-width="2" stroke-linejoin="round" stroke-linecap="round"/>
<path d="M972.7 477.8 L990.8 523.1 L1004.4 554.8" fill="none" stroke="#fff" stroke-width="2" stroke-linejoin="round" stroke-linecap="round"/>
<path d="M877.6 581.9 L925.1 595.5 L945.5 600.0" fill="none" stroke="#fff" stroke-width="2" stroke-linejoin="round" stroke-linecap="round"/>
<path d="M873.1 625.0 L882.1 650.1" fill="none" stroke="#fff" stroke-width="2" stroke-linejoin="round" stroke-linecap="round"/>
<path d="M990.8 572.9 L999.9 609.1 L1008.9 618.2" fill="none" stroke="#fff" stroke-width="2" stroke-linejoin="round" stroke-linecap="round"/>
<path d="M787.0 563.8 L800.6 609.1" fill="none" stroke="#fff" stroke-width="2" stroke-linejoin="round" stroke-linecap="round"/>
<path d="M800.6 550.2 L861.7 532.1" fill="none" stroke="#fff" stroke-width="2" stroke-linejoin="round" stroke-linecap="round"/>
<path d="M834.6 572.9 L843.6 600.0 L873.1 625.0" fill="none" stroke="#fff" stroke-width="2" stroke-linejoin="round" stroke-linecap="round"/>
<path d="M986.3 435.9 L1008.9 468.7" fill="none" stroke="#fff" stroke-width="2" stroke-linejoin="round" stroke-linecap="round"/>
<path d="M959.1 450.6 L990.8 435.9" fill="none" stroke="#fff" stroke-width="2" stroke-linejoin="round" stroke-linecap="round"/>
<path d="M347.0 763.2 L392.3 742.8" fill="none" stroke="#fff" stroke-width="2" stroke-linejoin="round" stroke-linecap="round"/>
<path d="M356.1 785.8 L408.1 758.6" fill="none" stroke="#fff" stroke-width="2" stroke-linejoin="round" stroke-linecap="round"/>
<path d="M369.6 808.4 L419.4 776.8" fill="none" stroke="#fff" stroke-width="2" stroke-linejoin="round" stroke-linecap="round"/>
<path d="M356.1 758.6 L387.7 817.5" fill="none" stroke="#fff" stroke-width="2" stroke-linejoin="round" stroke-linecap="round"/>
<path d="M371.9 751.9 L403.6 808.4" fill="none" stroke="#fff" stroke-width="2" stroke-linejoin="round" stroke-linecap="round"/>
<path d="M385.5 745.1 L417.2 797.1" fill="none" stroke="#fff" stroke-width="2" stroke-linejoin="round" stroke-linecap="round"/>
<path d="M347.0 813.0 L369.6 863.0" fill="none" stroke="#fff" stroke-width="2" stroke-linejoin="round" stroke-linecap="round"/>
<path d="M345.9 831.1 L360.6 837.9 L383.2 863.9" fill="none" stroke="#fff" stroke-width="2" stroke-linejoin="round" stroke-linecap="round"/>
<path d="M387.7 817.5 L399.1 863.0" fill="none" stroke="#fff" stroke-width="2" stroke-linejoin="round" stroke-linecap="round"/>
<path d="M442.1 794.9 L519.0 772.2" fill="none" stroke="#fff" stroke-width="2" stroke-linejoin="round" stroke-linecap="round"/>
<path d="M451.1 810.7 L528.1 788.1" fill="none" stroke="#fff" stroke-width="2" stroke-linejoin="round" stroke-linecap="round"/>
<path d="M460.2 826.6 L534.9 806.2" fill="none" stroke="#fff" stroke-width="2" stroke-linejoin="round" stroke-linecap="round"/>
<path d="M469.2 842.4 L541.7 824.3" fill="none" stroke="#fff" stroke-width="2" stroke-linejoin="round" stroke-linecap="round"/>
<path d="M478.3 858.2 L568.8 833.3" fill="none" stroke="#fff" stroke-width="2" stroke-linejoin="round" stroke-linecap="round"/>
<path d="M426.2 715.6 L460.2 776.8" fill="none" stroke="#fff" stroke-width="2" stroke-linejoin="round" stroke-linecap="round"/>
<path d="M446.6 710.0 L473.8 756.4" fill="none" stroke="#fff" stroke-width="2" stroke-linejoin="round" stroke-linecap="round"/>
<path d="M519.0 785.8 L568.8 770.0" fill="none" stroke="#fff" stroke-width="2" stroke-linejoin="round" stroke-linecap="round"/>
<path d="M528.1 806.2 L568.8 794.9" fill="none" stroke="#fff" stroke-width="2" stroke-linejoin="round" stroke-linecap="round"/>
<path d="M534.9 824.3 L568.8 815.2" fill="none" stroke="#fff" stroke-width="2" stroke-linejoin="round" stroke-linecap="round"/>
<path d="M347.0 684.0 L381.0 672.6 L369.6 648.9" fill="none" stroke="#fff" stroke-width="2" stroke-linejoin="round" stroke-linecap="round"/>
<path d="M381.0 672.6 L437.5 663.6 L482.8 672.6 L491.9 650.0" fill="none" stroke="#fff" stroke-width="2" stroke-linejoin="round" stroke-linecap="round"/>
<path d="M437.5 663.6 L433.0 648.9" fill="none" stroke="#fff" stroke-width="2" stroke-linejoin="round" stroke-linecap="round"/>
<path d="M482.8 672.6 L487.3 699.8" fill="none" stroke="#fff" stroke-width="2" stroke-linejoin="round" stroke-linecap="round"/>
<path d="M514.5 668.1 L567.0 663.6" fill="none" stroke="#fff" stroke-width="2" stroke-linejoin="round" stroke-linecap="round"/>
<path d="M519.0 648.9 L523.6 695.3" fill="none" stroke="#fff" stroke-width="2" stroke-linejoin="round" stroke-linecap="round"/>
<path d="M541.7 648.9 L546.2 690.7" fill="none" stroke="#fff" stroke-width="2" stroke-linejoin="round" stroke-linecap="round"/>
<path d="M662.1 729.2 L702.8 715.6 L787.0 684.0" fill="none" stroke="#fff" stroke-width="2" stroke-linejoin="round" stroke-linecap="round"/>
<path d="M666.6 740.5 L707.3 745.1" fill="none" stroke="#fff" stroke-width="2" stroke-linejoin="round" stroke-linecap="round"/>
<path d="M634.9 776.8 L675.6 767.7 L702.8 785.8" fill="none" stroke="#fff" stroke-width="2" stroke-linejoin="round" stroke-linecap="round"/>
<path d="M634.9 794.9 L693.8 776.8" fill="none" stroke="#fff" stroke-width="2" stroke-linejoin="round" stroke-linecap="round"/>
<path d="M567.0 828.8 L634.9 808.4" fill="none" stroke="#fff" stroke-width="2" stroke-linejoin="round" stroke-linecap="round"/>
<path d="M567.0 853.7 L621.3 837.9" fill="none" stroke="#fff" stroke-width="2" stroke-linejoin="round" stroke-linecap="round"/>
<path d="M739.0 785.8 L788.8 763.2" fill="none" stroke="#fff" stroke-width="2" stroke-linejoin="round" stroke-linecap="round"/>
<path d="M702.8 785.8 L725.4 826.6 L748.1 863.0" fill="none" stroke="#fff" stroke-width="2" stroke-linejoin="round" stroke-linecap="round"/>
<path d="M675.6 817.5 L702.8 863.0" fill="none" stroke="#fff" stroke-width="2" stroke-linejoin="round" stroke-linecap="round"/>
<path d="M748.1 684.0 L759.4 724.7 L770.7 754.1" fill="none" stroke="#fff" stroke-width="2" stroke-linejoin="round" stroke-linecap="round"/>
<path d="M725.4 661.3 L787.0 640.9" fill="none" stroke="#fff" stroke-width="2" stroke-linejoin="round" stroke-linecap="round"/>
<path d="M702.8 650.0 L711.9 690.7 L730.0 717.9" fill="none" stroke="#fff" stroke-width="2" stroke-linejoin="round" stroke-linecap="round"/>
<path d="M809.6 864.0 L843.6 785.9 L832.3 740.6 L823.2 695.3" fill="none" stroke="#fff" stroke-width="2" stroke-linejoin="round" stroke-linecap="round"/>
<path d="M823.2 695.3 L868.5 722.5" fill="none" stroke="#fff" stroke-width="2" stroke-linejoin="round" stroke-linecap="round"/>
<path d="M832.3 740.6 L882.1 754.2" fill="none" stroke="#fff" stroke-width="2" stroke-linejoin="round" stroke-linecap="round"/>
<path d="M787.0 767.8 L832.3 740.6" fill="none" stroke="#fff" stroke-width="2" stroke-linejoin="round" stroke-linecap="round"/>
<path d="M800.6 770.0 L814.2 804.0" fill="none" stroke="#fff" stroke-width="2" stroke-linejoin="round" stroke-linecap="round"/>
<path d="M816.4 761.0 L830.0 794.9" fill="none" stroke="#fff" stroke-width="2" stroke-linejoin="round" stroke-linecap="round"/>
<path d="M843.6 672.6 L854.9 706.6 L868.5 722.5" fill="none" stroke="#fff" stroke-width="2" stroke-linejoin="round" stroke-linecap="round"/>
<path d="M882.1 663.6 L909.3 648.9" fill="none" stroke="#fff" stroke-width="2" stroke-linejoin="round" stroke-linecap="round"/>
<path d="M927.4 720.2 L945.5 745.1 L931.9 767.8" fill="none" stroke="#fff" stroke-width="2" stroke-linejoin="round" stroke-linecap="round"/>
<path d="M945.5 745.1 L986.3 772.3 L1008.0 794.9" fill="none" stroke="#fff" stroke-width="2" stroke-linejoin="round" stroke-linecap="round"/>
<path d="M959.1 808.5 L1008.0 785.9" fill="none" stroke="#fff" stroke-width="2" stroke-linejoin="round" stroke-linecap="round"/>
<path d="M950.0 767.8 L975.0 756.4" fill="none" stroke="#fff" stroke-width="2" stroke-linejoin="round" stroke-linecap="round"/>
<path d="M832.3 831.2 L913.8 790.4" fill="none" stroke="#fff" stroke-width="2" stroke-linejoin="round" stroke-linecap="round"/>
<path d="M809.6 863.1 L854.9 838.0" fill="none" stroke="#fff" stroke-width="2" stroke-linejoin="round" stroke-linecap="round"/>
<path d="M963.6 831.2 L1008.0 808.5" fill="none" stroke="#fff" stroke-width="2" stroke-linejoin="round" stroke-linecap="round"/>
<path d="M591.9 222.9 L612.3 291.9 L634.9 371.1 L649.6 437.9" fill="none" stroke="#fff" stroke-width="3" stroke-linejoin="round" stroke-linecap="round"/>
<path d="M565.9 308.2 L612.3 298.7 L642.8 281.7" fill="none" stroke="#fff" stroke-width="3" stroke-linejoin="round" stroke-linecap="round"/>
<path d="M565.9 393.1 L681.3 346.2" fill="none" stroke="#fff" stroke-width="3" stroke-linejoin="round" stroke-linecap="round"/>
<path d="M662.1 222.9 L693.8 253.4" fill="none" stroke="#fff" stroke-width="3" stroke-linejoin="round" stroke-linecap="round"/>
<path d="M692.6 222.9 L698.3 253.4" fill="none" stroke="#fff" stroke-width="3" stroke-linejoin="round" stroke-linecap="round"/>
<path d="M707.3 255.7 L754.9 237.6 L788.8 227.4" fill="none" stroke="#fff" stroke-width="3" stroke-linejoin="round" stroke-linecap="round"/>
<path d="M725.4 289.6 L739.0 291.9 L788.8 264.3" fill="none" stroke="#fff" stroke-width="3" stroke-linejoin="round" stroke-linecap="round"/>
<path d="M739.0 291.9 L770.7 323.6 L788.8 330.4" fill="none" stroke="#fff" stroke-width="3" stroke-linejoin="round" stroke-linecap="round"/>
<path d="M785.9 421.5 L807.4 412.0 L882.1 373.5 L936.5 339.5 L950.0 323.6 L965.9 318.0" fill="none" stroke="#fff" stroke-width="3" stroke-linejoin="round" stroke-linecap="round"/>
<path d="M884.4 301.0 L900.2 323.6 L936.5 339.5 L941.0 380.2 L1008.9 359.4" fill="none" stroke="#fff" stroke-width="3" stroke-linejoin="round" stroke-linecap="round"/>
<path d="M965.9 318.0 L981.7 364.4 L990.8 382.5 L1008.9 401.8" fill="none" stroke="#fff" stroke-width="3" stroke-linejoin="round" stroke-linecap="round"/>
<path d="M362.8 572.8 L469.2 525.3" fill="none" stroke="#fff" stroke-width="3" stroke-linejoin="round" stroke-linecap="round"/>
<path d="M345.9 563.8 L369.6 541.1 L399.1 525.3 L414.9 507.2" fill="none" stroke="#fff" stroke-width="3" stroke-linejoin="round" stroke-linecap="round"/>
<path d="M345.9 614.0 L414.9 581.9 L505.4 543.4" fill="none" stroke="#fff" stroke-width="3" stroke-linejoin="round" stroke-linecap="round"/>
<path d="M399.1 525.3 L414.9 550.2 L426.2 572.8 L442.1 624.9" fill="none" stroke="#fff" stroke-width="3" stroke-linejoin="round" stroke-linecap="round"/>
<path d="M565.9 557.0 L620.2 533.2 L657.5 516.2 L675.6 493.6" fill="none" stroke="#fff" stroke-width="3" stroke-linejoin="round" stroke-linecap="round"/>
<path d="M565.9 595.4 L594.2 593.2 L710.7 529.8" fill="none" stroke="#fff" stroke-width="3" stroke-linejoin="round" stroke-linecap="round"/>
<path d="M644.0 437.0 L662.1 482.3 L675.6 516.2 L684.7 550.2 L702.8 595.4" fill="none" stroke="#fff" stroke-width="3" stroke-linejoin="round" stroke-linecap="round"/>
<path d="M675.6 650.9 L761.7 618.1 L788.8 605.6" fill="none" stroke="#fff" stroke-width="3" stroke-linejoin="round" stroke-linecap="round"/>
<path d="M886.6 435.9 L895.7 461.9" fill="none" stroke="#fff" stroke-width="3" stroke-linejoin="round" stroke-linecap="round"/>
<path d="M785.9 581.9 L834.6 572.9 L886.6 554.8" fill="none" stroke="#fff" stroke-width="3" stroke-linejoin="round" stroke-linecap="round"/>
<path d="M469.2 706.6 L491.9 751.9" fill="none" stroke="#fff" stroke-width="3" stroke-linejoin="round" stroke-linecap="round"/>
<path d="M505.4 747.3 L519.0 785.8 L529.2 863.9" fill="none" stroke="#fff" stroke-width="3" stroke-linejoin="round" stroke-linecap="round"/>
<path d="M565.9 664.0 L612.3 669.2 L693.8 650.0" fill="none" stroke="#fff" stroke-width="3" stroke-linejoin="round" stroke-linecap="round"/>
<path d="M565.9 788.1 L598.7 776.8" fill="none" stroke="#fff" stroke-width="3" stroke-linejoin="round" stroke-linecap="round"/>
<path d="M598.7 767.7 L634.9 822.0 L659.8 863.9" fill="none" stroke="#fff" stroke-width="3" stroke-linejoin="round" stroke-linecap="round"/>
<path d="M621.3 763.2 L653.0 813.0 L680.2 863.9" fill="none" stroke="#fff" stroke-width="3" stroke-linejoin="round" stroke-linecap="round"/>
<path d="M641.7 695.3 L693.8 674.9 L788.8 648.9" fill="none" stroke="#fff" stroke-width="3" stroke-linejoin="round" stroke-linecap="round"/>
<path d="M668.9 648.9 L689.2 702.1 L707.3 745.1 L734.5 790.3" fill="none" stroke="#fff" stroke-width="3" stroke-linejoin="round" stroke-linecap="round"/>
<path d="M886.6 724.7 L922.9 776.8 L950.0 831.2 L964.8 864.0" fill="none" stroke="#fff" stroke-width="3" stroke-linejoin="round" stroke-linecap="round"/>
<path d="M990.8 648.9 L1008.9 695.3" fill="none" stroke="#fff" stroke-width="3" stroke-linejoin="round" stroke-linecap="round"/>
<path d="M487.3 368.9 L519.0 385.8 L541.7 393.8 L568.8 405.1" fill="none" stroke="#fff" stroke-width="4" stroke-linejoin="round" stroke-linecap="round"/>
<path d="M513.4 222.9 L528.1 269.3 L528.1 289.6 L557.5 314.5 L568.8 330.4" fill="none" stroke="#fff" stroke-width="4" stroke-linejoin="round" stroke-linecap="round"/>
<path d="M345.9 413.0 L369.6 416.4 L381.0 437.9" fill="none" stroke="#fff" stroke-width="4" stroke-linejoin="round" stroke-linecap="round"/>
<path d="M564.3 323.6 L573.8 359.8 L582.8 396.0 L593.0 437.9" fill="none" stroke="#fff" stroke-width="4" stroke-linejoin="round" stroke-linecap="round"/>
<path d="M634.9 222.9 L693.8 253.4 L707.3 255.7 L725.4 289.6" fill="none" stroke="#fff" stroke-width="4" stroke-linejoin="round" stroke-linecap="round"/>
<path d="M725.4 289.6 L711.9 291.9 L702.8 319.1 L693.8 351.9" fill="none" stroke="#fff" stroke-width="4" stroke-linejoin="round" stroke-linecap="round"/>
<path d="M843.6 291.9 L882.1 371.2 L900.2 405.2 L910.4 438.0" fill="none" stroke="#fff" stroke-width="4" stroke-linejoin="round" stroke-linecap="round"/>
<path d="M785.9 238.0 L802.9 222.9" fill="none" stroke="#fff" stroke-width="4" stroke-linejoin="round" stroke-linecap="round"/>
<path d="M345.9 473.2 L365.1 477.7 L383.2 471.0 L385.5 450.6 L381.0 435.9" fill="none" stroke="#fff" stroke-width="4" stroke-linejoin="round" stroke-linecap="round"/>
<path d="M385.5 475.5 L433.0 493.6 L473.8 502.6 L534.9 475.5 L568.8 463.7" fill="none" stroke="#fff" stroke-width="4" stroke-linejoin="round" stroke-linecap="round"/>
<path d="M345.9 640.7 L403.6 629.4 L442.1 624.9 L482.8 613.6 L528.1 600.0 L568.8 581.9" fill="none" stroke="#fff" stroke-width="4" stroke-linejoin="round" stroke-linecap="round"/>
<path d="M593.0 435.9 L596.4 471.0 L621.3 533.2 L634.9 563.8 L662.1 618.1 L675.6 650.9" fill="none" stroke="#fff" stroke-width="4" stroke-linejoin="round" stroke-linecap="round"/>
<path d="M567.0 458.5 L596.4 471.0 L628.6 487.9 L671.1 508.3 L693.8 523.0 L711.9 529.8" fill="none" stroke="#fff" stroke-width="4" stroke-linejoin="round" stroke-linecap="round"/>
<path d="M895.7 461.9 L936.5 484.6 L1008.9 450.1" fill="none" stroke="#fff" stroke-width="4" stroke-linejoin="round" stroke-linecap="round"/>
<path d="M922.9 435.9 L936.5 484.6" fill="none" stroke="#fff" stroke-width="4" stroke-linejoin="round" stroke-linecap="round"/>
<path d="M358.3 648.9 L410.4 740.5 L437.5 785.8 L483.9 863.9" fill="none" stroke="#fff" stroke-width="4" stroke-linejoin="round" stroke-linecap="round"/>
<path d="M491.9 751.9 L519.0 785.8 L542.8 863.9" fill="none" stroke="#fff" stroke-width="4" stroke-linejoin="round" stroke-linecap="round"/>
<path d="M345.9 843.5 L387.7 817.5 L433.0 785.8 L487.3 770.0 L568.8 749.1" fill="none" stroke="#fff" stroke-width="4" stroke-linejoin="round" stroke-linecap="round"/>
<path d="M565.9 767.7 L601.0 756.4 L641.7 742.8" fill="none" stroke="#fff" stroke-width="4" stroke-linejoin="round" stroke-linecap="round"/>
<path d="M716.4 648.9 L730.0 717.9 L739.0 785.8 L759.4 826.6 L788.8 863.9" fill="none" stroke="#fff" stroke-width="4" stroke-linejoin="round" stroke-linecap="round"/>
<path d="M657.5 863.9 L734.5 790.3 L788.8 735.6" fill="none" stroke="#fff" stroke-width="4" stroke-linejoin="round" stroke-linecap="round"/>
<path d="M785.9 813.5 L861.7 776.8 L893.4 740.6 L927.4 720.2 L945.5 706.6" fill="none" stroke="#fff" stroke-width="4" stroke-linejoin="round" stroke-linecap="round"/>
<path d="M843.6 672.6 L882.1 663.6 L945.5 702.1 L1008.9 764.4" fill="none" stroke="#fff" stroke-width="4" stroke-linejoin="round" stroke-linecap="round"/>
<path d="M345.9 359.1 L381.0 350.8 L414.9 340.6 L460.2 336.0 L494.1 336.0 L519.0 332.6 L539.4 325.9 L568.8 313.4" fill="none" stroke="#fff" stroke-width="5" stroke-linejoin="round" stroke-linecap="round"/>
<path d="M345.9 382.4 L392.3 377.0 L408.1 362.1 L424.0 354.1" fill="none" stroke="#fff" stroke-width="5" stroke-linejoin="round" stroke-linecap="round"/>
<path d="M345.9 480.7 L414.9 507.2 L473.8 525.3 L568.8 557.6" fill="none" stroke="#fff" stroke-width="5" stroke-linejoin="round" stroke-linecap="round"/>
<path d="M936.5 484.6 L954.6 527.6 L975.0 595.5 L984.0 651.0" fill="none" stroke="#fff" stroke-width="5" stroke-linejoin="round" stroke-linecap="round"/>
<path d="M798.3 609.1 L809.6 618.2 L873.1 625.0 L895.7 609.1 L925.1 595.5 L968.2 581.9 L1008.9 570.2" fill="none" stroke="#fff" stroke-width="5" stroke-linejoin="round" stroke-linecap="round"/>
<path d="M345.9 728.3 L414.9 715.6 L487.3 699.8 L528.1 695.3 L568.8 683.5" fill="none" stroke="#fff" stroke-width="5" stroke-linejoin="round" stroke-linecap="round"/>
<path d="M618.6 222.9 L641.7 280.6 L664.3 314.5 L693.8 353.0 L711.9 382.4 L731.1 437.9" fill="none" stroke="#fff" stroke-width="5.5" stroke-linejoin="round" stroke-linecap="round"/>
<path d="M345.9 281.0 L453.4 228.5 L469.2 219.5" fill="none" stroke="#fff" stroke-width="6.2" stroke-linejoin="round" stroke-linecap="round"/>
<path d="M780.2 316.4 L845.9 289.7 L945.5 251.2 L968.2 230.8 L976.1 222.9" fill="none" stroke="#fff" stroke-width="6.2" stroke-linejoin="round" stroke-linecap="round"/>
<clipPath id="ycp"><path d="M736.8 460.4 L778.0 447.0 L820.9 437.0 L830.3 460.4 L839.6 518.8 L872.4 560.9 L867.7 575.0 L830.3 584.3 L792.9 579.6 L788.2 560.9 L760.1 570.3 L753.1 542.2 L732.1 518.8 L722.7 495.5 L729.7 472.1Z"/></clipPath>
<g clip-path="url(#ycp)"><path d="M677.7 441.0L771.5 617.6M691.0 434.2L784.9 610.7M704.4 427.3L798.3 603.9M717.7 420.5L811.6 597.1M731.1 413.7L825.0 590.3M744.5 406.9L838.4 583.5M757.8 400.1L851.7 576.7M771.2 393.3L865.1 569.9M784.6 386.5L878.5 563.1M797.9 379.7L891.8 556.3M811.3 372.9L905.2 549.5M677.0 471.6L846.3 385.4M686.8 490.2L856.1 403.9M696.7 508.7L866.0 422.4M706.5 527.2L875.8 441.0M716.4 545.8L885.7 459.5M726.3 564.3L895.5 478.1M736.1 582.9L905.4 496.6M746.0 601.4L915.3 515.1M755.8 619.9L925.1 533.7" fill="none" stroke="#fff" stroke-width="1.8"/><path d="M742 470l22-8 9 20-22 9zM790 520l20-9 10 22-20 9zM800 470l16-7 8 18-16 8zM770 540l14-6 6 14-14 6z" fill="#eceef0"/></g>
<path d="M984.0 853.8 L990.8 842.5 L1011.2 827.8" fill="none" stroke="#f3c244" stroke-width="5" stroke-linejoin="round" stroke-linecap="round" />
<path d="M985.1 853.8 L991.5 843.2 L1011.2 828.9" fill="none" stroke="#fbd968" stroke-width="3" stroke-linejoin="round" stroke-linecap="round" />
<g fill="none" stroke="#8cc79b" stroke-width=".7"><path d="M790 323L826 396M811 314L846 385M772 341L874 358M778 356L868 340M783 371L858 343M793 390L878 366M800 318L812 350M830 307L860 378"/></g>
<g fill="none" stroke="#e6f4e9" stroke-width="1.1"><ellipse cx="634" cy="719" rx="16" ry="26" transform="rotate(-18 634 719)"/><ellipse cx="630" cy="708" rx="10" ry="14" transform="rotate(-18 630 708)"/><ellipse cx="641" cy="733" rx="9" ry="13" transform="rotate(-18 641 733)"/><path d="M613 700L655 738M622 748L645 690"/></g>
<g fill="none" stroke="#e6f4e9" stroke-width="1"><path d="M505 494L563 551M515 489L570 548M527 484L576 545M500 497L540 481M512 511L548 494M523 523L557 507M535 536L566 521"/></g>
<g fill="none" stroke="#e6f4e9" stroke-width="1.2"><path d="M860 848.0L890 895.0M870 841.8L900 888.8M880 835.6L910 882.6M890 829.4L920 876.4M900 823.2L930 870.2M910 817.0L940 864.0M920 810.8L950 857.8M930 804.6L960 851.6M940 798.4L970 845.4M852 846L925 801M858 856L931 811M864 866L937 821M870 876L943 831M876 886L949 841M882 896L955 851"/></g>
<text x="375" y="262" font-size="11.5" fill="#5f6368" font-weight="400" letter-spacing="0" text-anchor="middle" transform="rotate(-26 375 262)" stroke="#fff" stroke-width="2.6" paint-order="stroke" stroke-linejoin="round" >d Pinchard</text>
<text x="540" y="266" font-size="11.5" fill="#5f6368" font-weight="400" letter-spacing="0" text-anchor="middle" transform="rotate(71 540 266)" stroke="#fff" stroke-width="2.6" paint-order="stroke" stroke-linejoin="round" >Bd de Scarpone</text>
<text x="822" y="261" font-size="11.5" fill="#5f6368" font-weight="400" letter-spacing="0" text-anchor="middle" transform="rotate(14 822 261)" stroke="#fff" stroke-width="2.6" paint-order="stroke" stroke-linejoin="round" >Rue Oberlin</text>
<text x="894.6" y="278.3" font-size="11.9" fill="#5f6368" font-weight="400" letter-spacing="0" text-anchor="middle" transform="rotate(-21 894.6 278.3)" stroke="#fff" stroke-width="2.6" paint-order="stroke" stroke-linejoin="round" >Viaduc Louis Marin</text>
<text x="971" y="306" font-size="13" fill="#3c6fc4" font-weight="400" letter-spacing="0" text-anchor="middle" transform="rotate(42 971 306)"  >La Meurthe</text>
<text x="382" y="499" font-size="11" fill="#5f6368" font-weight="400" letter-spacing="0" text-anchor="middle" transform="rotate(18 382 499)" stroke="#fff" stroke-width="2.6" paint-order="stroke" stroke-linejoin="round" >de Boufflers</text>
<text x="513" y="542" font-size="11" fill="#5f6368" font-weight="400" letter-spacing="0" text-anchor="middle" transform="rotate(18 513 542)" stroke="#fff" stroke-width="2.6" paint-order="stroke" stroke-linejoin="round" >Av. de Boufflers</text>
<text x="357" y="553" font-size="11" fill="#5f6368" font-weight="400" letter-spacing="0" text-anchor="middle" transform="rotate(-33 357 553)" stroke="#fff" stroke-width="2.6" paint-order="stroke" stroke-linejoin="round" >rbois</text>
<text x="378" y="598" font-size="11" fill="#5f6368" font-weight="400" letter-spacing="0" text-anchor="middle" transform="rotate(-22 378 598)" stroke="#fff" stroke-width="2.6" paint-order="stroke" stroke-linejoin="round" >e Ernest Albert</text>
<text x="384" y="698" font-size="11.5" fill="#5f6368" font-weight="400" letter-spacing="0" text-anchor="middle" transform="rotate(60 384 698)" stroke="#fff" stroke-width="2.6" paint-order="stroke" stroke-linejoin="round" >Bd Maréchal Foch</text>
<text x="462" y="829" font-size="11.5" fill="#5f6368" font-weight="400" letter-spacing="0" text-anchor="middle" transform="rotate(57 462 829)" stroke="#fff" stroke-width="2.6" paint-order="stroke" stroke-linejoin="round" >Bd Dr Cattenoz</text>
<text x="512" y="817" font-size="11.5" fill="#5f6368" font-weight="400" letter-spacing="0" text-anchor="middle" transform="rotate(54 512 817)" stroke="#fff" stroke-width="2.6" paint-order="stroke" stroke-linejoin="round" >Bd de Baudricourt</text>
<text x="689.5" y="708" font-size="11.5" fill="#5f6368" font-weight="400" letter-spacing="0" text-anchor="middle" transform="rotate(64 689.5 708)" stroke="#fff" stroke-width="2.6" paint-order="stroke" stroke-linejoin="round" >Rue Jeanne d'Arc</text>
<text x="916.5" y="792.5" font-size="11.5" fill="#5f6368" font-weight="400" letter-spacing="0" text-anchor="middle" transform="rotate(60 916.5 792.5)" stroke="#fff" stroke-width="2.6" paint-order="stroke" stroke-linejoin="round" >Quai de la Bataille</text>
<text x="979" y="628" font-size="11.5" fill="#5f6368" font-weight="400" letter-spacing="0" text-anchor="middle" transform="rotate(72 979 628)" stroke="#fff" stroke-width="2.6" paint-order="stroke" stroke-linejoin="round" >Bd L</text>
<text x="1000" y="414" font-size="10.5" fill="#5f6368" font-weight="400" letter-spacing="0" text-anchor="middle" transform="rotate(70 1000 414)" stroke="#fff" stroke-width="2.6" paint-order="stroke" stroke-linejoin="round" >Bd</text>
<text x="812" y="541" font-size="11" fill="#8a8a8a" font-weight="400" letter-spacing="0" text-anchor="middle" transform="rotate(64 812 541)" stroke="#fff" stroke-width="2.6" paint-order="stroke" stroke-linejoin="round" >Rue Saint-Dizier</text>
<rect x="626" y="265" width="32" height="13" rx="1.5" fill="#f9cf4e" stroke="#e5b43a" stroke-width=".6"/><text x="642.0" y="275.2" font-size="10.5" font-weight="400" fill="#3f3a10" stroke="#3f3a10" stroke-width=".3" text-anchor="middle">D657</text>
<rect x="359" y="376" width="32" height="13" rx="1.5" fill="#f9cf4e" stroke="#e5b43a" stroke-width=".6"/><text x="375.0" y="386.2" font-size="10.5" font-weight="400" fill="#3f3a10" stroke="#3f3a10" stroke-width=".3" text-anchor="middle">D400</text>
<rect x="612" y="481" width="32" height="13" rx="1.5" fill="#f9cf4e" stroke="#e5b43a" stroke-width=".6"/><text x="628.0" y="491.2" font-size="10.5" font-weight="400" fill="#3f3a10" stroke="#3f3a10" stroke-width=".3" text-anchor="middle">D400</text>
<rect x="655" y="501" width="32" height="13" rx="1.5" fill="#f9cf4e" stroke="#e5b43a" stroke-width=".6"/><text x="671.0" y="511.2" font-size="10.5" font-weight="400" fill="#3f3a10" stroke="#3f3a10" stroke-width=".3" text-anchor="middle">D400</text>
<rect x="717" y="472.5" width="31" height="13" rx="1.5" fill="#f9cf4e" stroke="#e5b43a" stroke-width=".6"/><text x="732.5" y="482.7" font-size="10.5" font-weight="400" fill="#3f3a10" stroke="#3f3a10" stroke-width=".3" text-anchor="middle">D400</text>
<rect x="693" y="383" width="30" height="13" rx="1.5" fill="#f9cf4e" stroke="#e5b43a" stroke-width=".6"/><text x="708.0" y="393.2" font-size="10.5" font-weight="400" fill="#3f3a10" stroke="#3f3a10" stroke-width=".3" text-anchor="middle">D657</text>
<rect x="429" y="625" width="26" height="13" rx="1.5" fill="#f9cf4e" stroke="#e5b43a" stroke-width=".6"/><text x="442.0" y="635.2" font-size="10.5" font-weight="400" fill="#3f3a10" stroke="#3f3a10" stroke-width=".3" text-anchor="middle">D39</text>
<rect x="383" y="801" width="26" height="13" rx="1.5" fill="#f9cf4e" stroke="#e5b43a" stroke-width=".6"/><text x="396.0" y="811.2" font-size="10.5" font-weight="400" fill="#3f3a10" stroke="#3f3a10" stroke-width=".3" text-anchor="middle">D92</text>
<rect x="473" y="759" width="26" height="13" rx="1.5" fill="#f9cf4e" stroke="#e5b43a" stroke-width=".6"/><text x="486.0" y="769.2" font-size="10.5" font-weight="400" fill="#3f3a10" stroke="#3f3a10" stroke-width=".3" text-anchor="middle">D92</text>
<rect x="775" y="818" width="34" height="13" rx="1.5" fill="#f9cf4e" stroke="#e5b43a" stroke-width=".6"/><text x="792.0" y="828.2" font-size="10.5" font-weight="400" fill="#3f3a10" stroke="#3f3a10" stroke-width=".3" text-anchor="middle">D93A</text>
<rect x="767" y="840" width="34" height="13" rx="1.5" fill="#f9cf4e" stroke="#e5b43a" stroke-width=".6"/><text x="784.0" y="850.2" font-size="10.5" font-weight="400" fill="#3f3a10" stroke="#3f3a10" stroke-width=".3" text-anchor="middle">D93C</text>
<text x="463" y="363.0" font-size="15" fill="#4e5258" font-weight="400" letter-spacing="1.05" text-anchor="middle" transform="rotate(0 463 363.0)" stroke="#fff" stroke-width="2.6" paint-order="stroke" stroke-linejoin="round" >BOUDONVILLE</text>
<text x="463" y="363.0" font-size="15" fill="#4e5258" font-weight="400" letter-spacing="1.05" text-anchor="middle" transform="rotate(0 463 363.0)"  stroke="#4e5258" stroke-width=".1">BOUDONVILLE</text>
<text x="463" y="378.5" font-size="15" fill="#4e5258" font-weight="400" letter-spacing="1.05" text-anchor="middle" transform="rotate(0 463 378.5)" stroke="#fff" stroke-width="2.6" paint-order="stroke" stroke-linejoin="round" >- SCARPONE</text>
<text x="463" y="378.5" font-size="15" fill="#4e5258" font-weight="400" letter-spacing="1.05" text-anchor="middle" transform="rotate(0 463 378.5)"  stroke="#4e5258" stroke-width=".1">- SCARPONE</text>
<text x="463" y="394.0" font-size="15" fill="#4e5258" font-weight="400" letter-spacing="1.05" text-anchor="middle" transform="rotate(0 463 394.0)" stroke="#fff" stroke-width="2.6" paint-order="stroke" stroke-linejoin="round" >- LIBÉRATION</text>
<text x="463" y="394.0" font-size="15" fill="#4e5258" font-weight="400" letter-spacing="1.05" text-anchor="middle" transform="rotate(0 463 394.0)"  stroke="#4e5258" stroke-width=".1">- LIBÉRATION</text>
<text x="581" y="575.0" font-size="14.5" fill="#4e5258" font-weight="400" letter-spacing="1.5" text-anchor="middle" transform="rotate(0 581 575.0)" stroke="#fff" stroke-width="2.6" paint-order="stroke" stroke-linejoin="round" >POINCARÉ -</text>
<text x="581" y="575.0" font-size="14.5" fill="#4e5258" font-weight="400" letter-spacing="1.5" text-anchor="middle" transform="rotate(0 581 575.0)"  stroke="#4e5258" stroke-width=".1">POINCARÉ -</text>
<text x="581" y="590.5" font-size="14.5" fill="#4e5258" font-weight="400" letter-spacing="1.5" text-anchor="middle" transform="rotate(0 581 590.5)" stroke="#fff" stroke-width="2.6" paint-order="stroke" stroke-linejoin="round" >FOCH - ANATOLE</text>
<text x="581" y="590.5" font-size="14.5" fill="#4e5258" font-weight="400" letter-spacing="1.5" text-anchor="middle" transform="rotate(0 581 590.5)"  stroke="#4e5258" stroke-width=".1">FOCH - ANATOLE</text>
<text x="581" y="606.0" font-size="14.5" fill="#4e5258" font-weight="400" letter-spacing="1.5" text-anchor="middle" transform="rotate(0 581 606.0)" stroke="#fff" stroke-width="2.6" paint-order="stroke" stroke-linejoin="round" >FRANCE -</text>
<text x="581" y="606.0" font-size="14.5" fill="#4e5258" font-weight="400" letter-spacing="1.5" text-anchor="middle" transform="rotate(0 581 606.0)"  stroke="#4e5258" stroke-width=".1">FRANCE -</text>
<text x="581" y="621.5" font-size="14.5" fill="#4e5258" font-weight="400" letter-spacing="1.5" text-anchor="middle" transform="rotate(0 581 621.5)" stroke="#fff" stroke-width="2.6" paint-order="stroke" stroke-linejoin="round" >CROIX DE</text>
<text x="581" y="621.5" font-size="14.5" fill="#4e5258" font-weight="400" letter-spacing="1.5" text-anchor="middle" transform="rotate(0 581 621.5)"  stroke="#4e5258" stroke-width=".1">CROIX DE</text>
<text x="581" y="637.0" font-size="14.5" fill="#4e5258" font-weight="400" letter-spacing="1.5" text-anchor="middle" transform="rotate(0 581 637.0)" stroke="#fff" stroke-width="2.6" paint-order="stroke" stroke-linejoin="round" >BOURGOGNE</text>
<text x="581" y="637.0" font-size="14.5" fill="#4e5258" font-weight="400" letter-spacing="1.5" text-anchor="middle" transform="rotate(0 581 637.0)"  stroke="#4e5258" stroke-width=".1">BOURGOGNE</text>
<text x="764" y="757.0" font-size="15" fill="#4e5258" font-weight="400" letter-spacing="1.7" text-anchor="middle" transform="rotate(0 764 757.0)" stroke="#fff" stroke-width="2.6" paint-order="stroke" stroke-linejoin="round" >SAURUPT</text>
<text x="764" y="757.0" font-size="15" fill="#4e5258" font-weight="400" letter-spacing="1.7" text-anchor="middle" transform="rotate(0 764 757.0)"  stroke="#4e5258" stroke-width=".1">SAURUPT</text>
<text x="1010" y="727" font-size="15" fill="#4a4e54" font-weight="400" letter-spacing="1.8" text-anchor="end" transform="rotate(0 1010 727)" stroke="#fff" stroke-width="2.6" paint-order="stroke" stroke-linejoin="round" >NT</text>
<text x="1012" y="742" font-size="15" fill="#4a4e54" font-weight="400" letter-spacing="1.8" text-anchor="end" transform="rotate(0 1012 742)" stroke="#fff" stroke-width="2.6" paint-order="stroke" stroke-linejoin="round" >- RE</text>
<text x="1013" y="757" font-size="15" fill="#4a4e54" font-weight="400" letter-spacing="1.8" text-anchor="end" transform="rotate(0 1013 757)" stroke="#fff" stroke-width="2.6" paint-order="stroke" stroke-linejoin="round" >MARC</text>
<text x="383" y="646" font-size="18" fill="#222" font-weight="400" letter-spacing="0" text-anchor="middle" transform="rotate(0 383 646)" stroke="#fff" stroke-width="2.6" paint-order="stroke" stroke-linejoin="round" >Laxou</text>
<text x="789" y="486" font-size="25" fill="#1d1d1f" font-weight="700" letter-spacing="0" text-anchor="start" transform="rotate(0 789 486)" stroke="#fff" stroke-width="2.6" paint-order="stroke" stroke-linejoin="round" textLength="65" lengthAdjust="spacingAndGlyphs">Nancy</text>
<text x="410" y="439" font-size="16" fill="#1e8e4a" font-weight="400" letter-spacing="0" text-anchor="middle" transform="rotate(0 410 439)" stroke="#fff" stroke-width="2.6" paint-order="stroke" stroke-linejoin="round" >c de la Cure d'Air</text>
<text x="824" y="359" font-size="16" fill="#2f8a52" font-weight="400" letter-spacing="0" text-anchor="middle" transform="rotate(0 824 359)" stroke="#fff" stroke-width="2.6" paint-order="stroke" stroke-linejoin="round" >Parc de la</text>
<text x="824" y="376" font-size="16" fill="#2f8a52" font-weight="400" letter-spacing="0" text-anchor="middle" transform="rotate(0 824 376)" stroke="#fff" stroke-width="2.6" paint-order="stroke" stroke-linejoin="round" >Pépinière</text>
<text x="567" y="421" font-size="15.5" fill="#5b7482" font-weight="400" letter-spacing="0" text-anchor="middle" transform="rotate(0 567 421)" stroke="#fff" stroke-width="2.6" paint-order="stroke" stroke-linejoin="round" >Campus</text>
<text x="567" y="438" font-size="15.5" fill="#5b7482" font-weight="400" letter-spacing="0" text-anchor="middle" transform="rotate(0 567 438)" stroke="#fff" stroke-width="2.6" paint-order="stroke" stroke-linejoin="round" >Lettres et</text>
<text x="567" y="454" font-size="15.5" fill="#5b7482" font-weight="400" letter-spacing="0" text-anchor="middle" transform="rotate(0 567 454)" stroke="#fff" stroke-width="2.6" paint-order="stroke" stroke-linejoin="round" >Sciences</text>
<text x="567" y="471" font-size="15.5" fill="#5b7482" font-weight="400" letter-spacing="0" text-anchor="middle" transform="rotate(0 567 471)" stroke="#fff" stroke-width="2.6" paint-order="stroke" stroke-linejoin="round" >Humaines...</text>
<text x="706.5" y="414" font-size="15.5" fill="#5b7482" font-weight="400" letter-spacing="0" text-anchor="middle" transform="rotate(0 706.5 414)" stroke="#fff" stroke-width="2.6" paint-order="stroke" stroke-linejoin="round" >Basilique Saint-Epvre</text>
<text x="733" y="435" font-size="16" fill="#168a9c" font-weight="400" letter-spacing="0" text-anchor="middle" transform="rotate(0 733 435)" stroke="#fff" stroke-width="2.6" paint-order="stroke" stroke-linejoin="round" >Place Stanislas</text>
<text x="889" y="399" font-size="16" fill="#168a9c" font-weight="400" letter-spacing="0" text-anchor="start" transform="rotate(0 889 399)" stroke="#fff" stroke-width="2.6" paint-order="stroke" stroke-linejoin="round" >Muséum-Aquarium</text>
<text x="889" y="416" font-size="16" fill="#168a9c" font-weight="400" letter-spacing="0" text-anchor="start" transform="rotate(0 889 416)" stroke="#fff" stroke-width="2.6" paint-order="stroke" stroke-linejoin="round" >de Nancy</text>
<text x="494" y="699" font-size="16" fill="#168a9c" font-weight="400" letter-spacing="0" text-anchor="middle" transform="rotate(0 494 699)" stroke="#fff" stroke-width="2.6" paint-order="stroke" stroke-linejoin="round" >Musée de l'École</text>
<text x="522" y="716" font-size="16" fill="#168a9c" font-weight="400" letter-spacing="0" text-anchor="middle" transform="rotate(0 522 716)" stroke="#fff" stroke-width="2.6" paint-order="stroke" stroke-linejoin="round" >de Nancy</text>
<text x="645" y="839" font-size="16" fill="#5b7482" font-weight="400" letter-spacing="0" text-anchor="middle" transform="rotate(0 645 839)" stroke="#fff" stroke-width="2.6" paint-order="stroke" stroke-linejoin="round" >ARTEM</text>
<text x="385" y="871" font-size="12" fill="#222" font-weight="700" letter-spacing="0" text-anchor="middle" transform="rotate(0 385 871)" stroke="#fff" stroke-width="2.6" paint-order="stroke" stroke-linejoin="round" >Laxou-Ville</text>
<g transform="translate(483 430)"><path d="M0 15C-2 10-11 6.500-11-2A11 11 0 1 1 11-2C11 6.500 2 10 0 15Z" fill="#34a853"/>
<path d="M0-9l4.500 6h-2l3.500 5h-4.500v3h-3v-3h-4.500l3.500-5h-2z" fill="#fff"/>
</g>
<g transform="translate(759 379)"><path d="M0 15C-2 10-11 6.500-11-2A11 11 0 1 1 11-2C11 6.500 2 10 0 15Z" fill="#78909c"/>
<path d="M-1.200-8h2.400v3.600h3.200v2.400h-3.200v7h-2.400v-7h-3.200v-2.400h3.200z" fill="#fff"/>
</g>
<g transform="translate(873 398)"><path d="M0 15C-2 10-11 6.500-11-2A11 11 0 1 1 11-2C11 6.500 2 10 0 15Z" fill="#12a5be"/>
<path d="M-5.500-4.500L0-8l5.500 3.500v1h-11zM-4.500-2.500h9v6h-9z" fill="#fff"/><path d="M-2.500 2.500v-4l2.500 2.500 2.500-2.500v4" stroke="#12a5be" stroke-width="1.100" fill="none"/>
</g>
<g transform="translate(808 425)"><path d="M0 15C-2 10-11 6.500-11-2A11 11 0 1 1 11-2C11 6.500 2 10 0 15Z" fill="#12a5be"/>
<path d="M-5.500-5.500h3l1-1.500h3l1 1.500h3v8h-11z" fill="#fff"/><circle cx="0" cy="-1.500" r="2.200" fill="#12a5be"/>
</g>
<circle cx="567.5" cy="380.5" r="11" fill="#78909c"/><path d="M560.500 378.500L567 375.500l6.500 3-6.500 3zM563.500 380.500v3.500c2 1.500 5 1.500 7 0v-3.500l-3.500 2z" fill="#fff"/>
<circle cx="645" cy="856" r="11" fill="#78909c"/><path d="M638.500 853.500L645 850.500l6.500 3-6.500 3zM641.500 855.500v3.500c2 1.500 5 1.500 7 0v-3.500l-3.500 2z" fill="#fff"/>
<g transform="translate(684 523)"><rect x="-7" y="-7" width="14" height="14" rx="2" fill="#1a73e8"/><rect x="-3.800" y="-4.500" width="7.600" height="7" rx="1.200" fill="#fff"/><rect x="-2.600" y="-3.300" width="5.200" height="2.400" fill="#1a73e8"/><circle cx="-2" cy=".8" r=".8" fill="#1a73e8"/><circle cx="2" cy=".8" r=".8" fill="#1a73e8"/><path d="M-3 4.500l1-1.800M3 4.500l-1-1.800" stroke="#fff" stroke-width="1"/></g>
<g transform="translate(699 549)"><rect x="-7" y="-7" width="14" height="14" rx="2" fill="#1a73e8"/><rect x="-3.800" y="-4.500" width="7.600" height="7" rx="1.200" fill="#fff"/><rect x="-2.600" y="-3.300" width="5.200" height="2.400" fill="#1a73e8"/><circle cx="-2" cy=".8" r=".8" fill="#1a73e8"/><circle cx="2" cy=".8" r=".8" fill="#1a73e8"/><path d="M-3 4.500l1-1.800M3 4.500l-1-1.800" stroke="#fff" stroke-width="1"/></g>
<g transform="translate(715 547)"><rect x="-7" y="-7" width="14" height="14" rx="2" fill="#1a73e8"/><rect x="-3.800" y="-4.500" width="7.600" height="7" rx="1.200" fill="#fff"/><rect x="-2.600" y="-3.300" width="5.200" height="2.400" fill="#1a73e8"/><circle cx="-2" cy=".8" r=".8" fill="#1a73e8"/><circle cx="2" cy=".8" r=".8" fill="#1a73e8"/><path d="M-3 4.500l1-1.800M3 4.500l-1-1.800" stroke="#fff" stroke-width="1"/></g>
<path d="M693.8 650.0 L612.3 669.2" fill="none" stroke="#69d9a8" stroke-width="2.7" stroke-linejoin="round" stroke-linecap="round"/>
<path d="M600.0 690.0 L573.0 710.0 L571.5 713.4 L599.8 771.1 L641.7 753.0 L700.5 737.1 L714.1 729.2 L770.7 705.5 L780.9 723.6 L787.0 717.9 L832.3 656.8 L838.0 640.0" fill="none" stroke="#69d9a8" stroke-width="2.7" stroke-linejoin="round" stroke-linecap="round"/>
<path d="M571.0 708.0 L600.0 702.0" fill="none" stroke="#69d9a8" stroke-width="2.7" stroke-linejoin="round" stroke-linecap="round"/>
<path d="M693.8 650.0 L700.0 645.7 L756.1 627.0 L762.0 618.8 L816.9 592.0 L834.4 585.0 L826.2 547.0" fill="none" stroke="#69d9a8" stroke-width="2.7" stroke-linejoin="round" stroke-linecap="round"/>
<path d="M820.4 516.0 L836.7 541.7 L802.9 558.0 L816.9 592.0 L830.9 617.7 L830.0 640.0" fill="none" stroke="#69d9a8" stroke-width="2.7" stroke-linejoin="round" stroke-linecap="round"/>
<path d="M730.3 482.5 L778.1 464.9 L777.3 458.9 L802.0 457.8" fill="none" stroke="#69d9a8" stroke-width="2.7" stroke-linejoin="round" stroke-linecap="round"/>
<path d="M734.0 487.0 L781.0 469.5 L781.0 462.5 L803.0 461.5" fill="none" stroke="#69d9a8" stroke-width="2.7" stroke-linejoin="round" stroke-linecap="round"/>
<path d="M722.3 494.4 L736.7 490.4 L730.3 482.5" fill="none" stroke="#69d9a8" stroke-width="2.7" stroke-linejoin="round" stroke-linecap="round"/>
<path d="M738.3 527.0 L746.0 546.0 L757.5 541.5 L749.4 525.5" fill="none" stroke="#69d9a8" stroke-width="2.7" stroke-linejoin="round" stroke-linecap="round"/>
<path d="M722.0 494.0 L728.0 520.0 L738.0 527.0" fill="none" stroke="#69d9a8" stroke-width="2.5" stroke-linejoin="round" stroke-linecap="round"/>
<path d="M688.5 333.0 L685.5 346.5 L692.6 356.0 L719.0 415.5 L731.9 439.4 L740.6 445.8 L739.9 455.4 L712.8 468.1 L700.0 484.0 L693.8 495.9 L700.5 525.3 L710.7 529.8 L599.0 586.0 L582.0 606.0 L568.0 641.0 L571.0 663.0 L565.0 674.0 L551.8 685.1 L521.3 691.9 L528.1 715.6 L478.3 767.7" fill="none" stroke="#5f6dd8" stroke-width="2.7" stroke-linejoin="round" stroke-linecap="round"/>
<path d="M528.1 715.6 L551.8 685.1" fill="none" stroke="#5f6dd8" stroke-width="2.7" stroke-linejoin="round" stroke-linecap="round"/>
<path d="M681.5 346.3 L685.5 358.0 L692.8 355.0 L688.0 345.0" fill="none" stroke="#5f6dd8" stroke-width="2.5" stroke-linejoin="round" stroke-linecap="round"/>
<path d="M553.0 395.0 L567.0 392.6 L681.3 346.2 L685.5 346.5" fill="none" stroke="#5f6dd8" stroke-width="2.7" stroke-linejoin="round" stroke-linecap="round"/>
<path d="M553.5 412.0 L557.6 451.0 L564.4 459.7 L595.3 469.8 L620.2 533.2 L570.4 555.8 L567.8 561.0 L573.0 585.0 L582.0 606.0" fill="none" stroke="#5f6dd8" stroke-width="2.7" stroke-linejoin="round" stroke-linecap="round"/>
<path d="M597.6 585.6 L606.4 669.7" fill="none" stroke="#5f6dd8" stroke-width="2.7" stroke-linejoin="round" stroke-linecap="round"/>
<g transform="translate(686 294)"><path d="M0 20.500C-3 14.500-13.400 9-13.400 0A13.400 13.400 0 1 1 13.400 0C13.400 9 3 14.500 0 20.500Z" fill="#5d6be0" stroke="#14144a" stroke-width="1.300"/><text x="0" y="6.1" font-size="17" font-weight="700" fill="#fff" text-anchor="middle">7</text></g>
<g transform="translate(682.8 272.2)"><path d="M0 20.500C-3 14.500-13.400 9-13.400 0A13.400 13.400 0 1 1 13.400 0C13.400 9 3 14.500 0 20.500Z" fill="#5d6be0" stroke="#14144a" stroke-width="1.300"/><text x="0" y="6.1" font-size="17" font-weight="700" fill="#fff" text-anchor="middle">8</text></g>
<g transform="translate(688.4 312.4)"><path d="M0 20.500C-3 14.500-13.400 9-13.400 0A13.400 13.400 0 1 1 13.400 0C13.400 9 3 14.500 0 20.500Z" fill="#5d6be0" stroke="#14144a" stroke-width="1.300"/><text x="0" y="6.1" font-size="17" font-weight="700" fill="#fff" text-anchor="middle">9</text></g>
<g transform="translate(729.5 404.3)"><path d="M0 20.500C-3 14.500-13.400 9-13.400 0A13.400 13.400 0 1 1 13.400 0C13.400 9 3 14.500 0 20.500Z" fill="#5d6be0" stroke="#14144a" stroke-width="1.300"/></g>
<g transform="translate(724.7 398)"><path d="M0 20.500C-3 14.500-13.400 9-13.400 0A13.400 13.400 0 1 1 13.400 0C13.400 9 3 14.500 0 20.500Z" fill="#5d6be0" stroke="#14144a" stroke-width="1.300"/><text x="0" y="6.1" font-size="17" font-weight="700" fill="#fff" text-anchor="middle">6</text></g>
<g transform="translate(741.4 428)"><path d="M0 20.500C-3 14.500-13.400 9-13.400 0A13.400 13.400 0 1 1 13.400 0C13.400 9 3 14.500 0 20.500Z" fill="#5d6be0" stroke="#14144a" stroke-width="1.300"/></g>
<g transform="translate(739 425.5)"><path d="M0 20.500C-3 14.500-13.400 9-13.400 0A13.400 13.400 0 1 1 13.400 0C13.400 9 3 14.500 0 20.500Z" fill="#5d6be0" stroke="#14144a" stroke-width="1.300"/><text x="0" y="6.1" font-size="17" font-weight="700" fill="#fff" text-anchor="middle">4</text></g>
<g transform="translate(553.5 395)"><path d="M0 20.500C-3 14.500-13.400 9-13.400 0A13.400 13.400 0 1 1 13.400 0C13.400 9 3 14.500 0 20.500Z" fill="#5d6be0" stroke="#14144a" stroke-width="1.300"/><text x="0" y="5.9" font-size="16.3" font-weight="700" fill="#fff" text-anchor="middle">11</text></g>
<g transform="translate(585.6 443.8)"><path d="M0 20.500C-3 14.500-13.400 9-13.400 0A13.400 13.400 0 1 1 13.400 0C13.400 9 3 14.500 0 20.500Z" fill="#5d6be0" stroke="#14144a" stroke-width="1.300"/><text x="0" y="5.9" font-size="16.3" font-weight="700" fill="#fff" text-anchor="middle">12</text></g>
<g transform="translate(704.6 509.4)"><path d="M0 20.500C-3 14.500-13.400 9-13.400 0A13.400 13.400 0 1 1 13.400 0C13.400 9 3 14.500 0 20.500Z" fill="#5d6be0" stroke="#14144a" stroke-width="1.300"/><text x="0" y="6.1" font-size="17" font-weight="700" fill="#fff" text-anchor="middle">2</text></g>
<g transform="translate(464.7 747.3)"><path d="M0 20.500C-3 14.500-13.400 9-13.400 0A13.400 13.400 0 1 1 13.400 0C13.400 9 3 14.500 0 20.500Z" fill="#5d6be0" stroke="#14144a" stroke-width="1.300"/></g>
<g transform="translate(466 751)"><path d="M0 20.500C-3 14.500-13.400 9-13.400 0A13.400 13.400 0 1 1 13.400 0C13.400 9 3 14.500 0 20.500Z" fill="#5d6be0" stroke="#14144a" stroke-width="1.300"/></g>
<g transform="translate(468 757.5)"><path d="M0 20.500C-3 14.500-13.400 9-13.400 0A13.400 13.400 0 1 1 13.400 0C13.400 9 3 14.500 0 20.500Z" fill="#5d6be0" stroke="#14144a" stroke-width="1.300"/><text x="0" y="5.9" font-size="16.3" font-weight="700" fill="#fff" text-anchor="middle">15</text></g>
<g transform="translate(779.7 433.8)"><path d="M0 20.500C-3 14.500-13.400 9-13.400 0A13.400 13.400 0 1 1 13.400 0C13.400 9 3 14.500 0 20.500Z" fill="#7ddcad" stroke="#0c3a25" stroke-width="1.300"/></g>
<g transform="translate(784.5 431.8)"><path d="M0 20.500C-3 14.500-13.400 9-13.400 0A13.400 13.400 0 1 1 13.400 0C13.400 9 3 14.500 0 20.500Z" fill="#7ddcad" stroke="#0c3a25" stroke-width="1.300"/></g>
<g transform="translate(791.2 429.9)"><path d="M0 20.500C-3 14.500-13.400 9-13.400 0A13.400 13.400 0 1 1 13.400 0C13.400 9 3 14.500 0 20.500Z" fill="#7ddcad" stroke="#0c3a25" stroke-width="1.300"/><text x="0" y="5.9" font-size="16.5" font-weight="400" fill="#fff" text-anchor="middle">16</text></g>
<g transform="translate(739.9 507.2)"><path d="M0 20.500C-3 14.500-13.400 9-13.400 0A13.400 13.400 0 1 1 13.400 0C13.400 9 3 14.500 0 20.500Z" fill="#7ddcad" stroke="#0c3a25" stroke-width="1.300"/></g>
<g transform="translate(745.4 509.6)"><path d="M0 20.500C-3 14.500-13.400 9-13.400 0A13.400 13.400 0 1 1 13.400 0C13.400 9 3 14.500 0 20.500Z" fill="#7ddcad" stroke="#0c3a25" stroke-width="1.300"/><text x="0" y="6.3" font-size="17.5" font-weight="400" fill="#fff" text-anchor="middle">1</text></g>
<g transform="translate(759 508.8)"><path d="M0 20.500C-3 14.500-13.400 9-13.400 0A13.400 13.400 0 1 1 13.400 0C13.400 9 3 14.500 0 20.500Z" fill="#7ddcad" stroke="#0c3a25" stroke-width="1.300"/></g>
<g transform="translate(784.5 493.6)"><path d="M0 20.500C-3 14.500-13.400 9-13.400 0A13.400 13.400 0 1 1 13.400 0C13.400 9 3 14.500 0 20.500Z" fill="#7ddcad" stroke="#0c3a25" stroke-width="1.300"/></g>
<g transform="translate(786.9 488.8)"><path d="M0 20.500C-3 14.500-13.400 9-13.400 0A13.400 13.400 0 1 1 13.400 0C13.400 9 3 14.500 0 20.500Z" fill="#7ddcad" stroke="#0c3a25" stroke-width="1.300"/></g>
<g transform="translate(789.3 484)"><path d="M0 20.500C-3 14.500-13.400 9-13.400 0A13.400 13.400 0 1 1 13.400 0C13.400 9 3 14.500 0 20.500Z" fill="#7ddcad" stroke="#0c3a25" stroke-width="1.300"/></g>
<g transform="translate(798 476.9)"><path d="M0 20.500C-3 14.500-13.400 9-13.400 0A13.400 13.400 0 1 1 13.400 0C13.400 9 3 14.500 0 20.500Z" fill="#7ddcad" stroke="#0c3a25" stroke-width="1.300"/></g>
<g transform="translate(751 500.8)"><path d="M0 20.500C-3 14.500-13.400 9-13.400 0A13.400 13.400 0 1 1 13.400 0C13.400 9 3 14.500 0 20.500Z" fill="#7ddcad" stroke="#0c3a25" stroke-width="1.300"/><text x="0" y="5.9" font-size="16.5" font-weight="400" fill="#fff" text-anchor="middle">14</text></g>
<g transform="translate(768.9 492)"><path d="M0 20.500C-3 14.500-13.400 9-13.400 0A13.400 13.400 0 1 1 13.400 0C13.400 9 3 14.500 0 20.500Z" fill="#7ddcad" stroke="#0c3a25" stroke-width="1.300"/><text x="0" y="5.9" font-size="16.5" font-weight="400" fill="#fff" text-anchor="middle">15</text></g>
<g transform="translate(810 505.6)"><path d="M0 20.500C-3 14.500-13.400 9-13.400 0A13.400 13.400 0 1 1 13.400 0C13.400 9 3 14.500 0 20.500Z" fill="#7ddcad" stroke="#0c3a25" stroke-width="1.300"/><text x="0" y="6.3" font-size="17.5" font-weight="400" fill="#fff" text-anchor="middle">2</text></g>
<g transform="translate(809.2 475.3)"><path d="M0 20.500C-3 14.500-13.400 9-13.400 0A13.400 13.400 0 1 1 13.400 0C13.400 9 3 14.500 0 20.500Z" fill="#7ddcad" stroke="#0c3a25" stroke-width="1.300"/><text x="0" y="5.9" font-size="16.5" font-weight="400" fill="#fff" text-anchor="middle">17</text></g>
<g transform="translate(847 613.6)"><path d="M0 20.500C-3 14.500-13.400 9-13.400 0A13.400 13.400 0 1 1 13.400 0C13.400 9 3 14.500 0 20.500Z" fill="#7ddcad" stroke="#0c3a25" stroke-width="1.300"/></g>
<g transform="translate(844.7 623.8)"><path d="M0 20.500C-3 14.500-13.400 9-13.400 0A13.400 13.400 0 1 1 13.400 0C13.400 9 3 14.500 0 20.500Z" fill="#7ddcad" stroke="#0c3a25" stroke-width="1.300"/><text x="0" y="5.9" font-size="16.5" font-weight="400" fill="#fff" text-anchor="middle">20</text></g>
<g transform="translate(827.8 637.4)"><path d="M0 20.500C-3 14.500-13.400 9-13.400 0A13.400 13.400 0 1 1 13.400 0C13.400 9 3 14.500 0 20.500Z" fill="#7ddcad" stroke="#0c3a25" stroke-width="1.300"/><text x="0" y="5.9" font-size="16.5" font-weight="400" fill="#fff" text-anchor="middle">22</text></g>
<g transform="translate(798.3 686.2)"><path d="M0 20.500C-3 14.500-13.400 9-13.400 0A13.400 13.400 0 1 1 13.400 0C13.400 9 3 14.500 0 20.500Z" fill="#7ddcad" stroke="#0c3a25" stroke-width="1.300"/><text x="0" y="5.9" font-size="16.5" font-weight="400" fill="#fff" text-anchor="middle">23</text></g>
<g transform="translate(602.5 684)"><path d="M0 20.500C-3 14.500-13.400 9-13.400 0A13.400 13.400 0 1 1 13.400 0C13.400 9 3 14.500 0 20.500Z" fill="#7ddcad" stroke="#0c3a25" stroke-width="1.300"/><text x="0" y="5.9" font-size="16.5" font-weight="400" fill="#fff" text-anchor="middle">19</text></g>
<g transform="translate(569.8 690)"><path d="M0 20.500C-3 14.500-13.400 9-13.400 0A13.400 13.400 0 1 1 13.400 0C13.400 9 3 14.500 0 20.500Z" fill="#7ddcad" stroke="#0c3a25" stroke-width="1.300"/><text x="0" y="6.3" font-size="17.5" font-weight="400" fill="#fff" text-anchor="middle">2</text></g>
<g transform="translate(582.5 692.5)"><path d="M0 20.500C-3 14.500-13.400 9-13.400 0A13.400 13.400 0 1 1 13.400 0C13.400 9 3 14.500 0 20.500Z" fill="#5d6be0" stroke="#14144a" stroke-width="1.300"/></g>
<g transform="translate(587.4 690.5)"><path d="M0-14.500L12.500-7.200V7.200L0 14.500L-12.500 7.200V-7.200Z" fill="#2c4fd4" stroke="#2c4fd4" stroke-width="2" stroke-linejoin="round"/><path d="M0 8.500C-3 4-5.500 1.500-5.500-2A5.500 5.500 0 1 1 5.500-2C5.500 1.500 3 4 0 8.500Z" fill="#fff"/><circle cx="0" cy="-2.200" r="2" fill="#2c4fd4"/></g>
<g><rect x="949" y="635" width="47" height="96" rx="2" fill="#fff" filter="url(#zs)"/><path d="M956 682.500h34" stroke="#e6e6e6" stroke-width="1"/><path d="M961.500 658.500h22M972.500 647.500v22M961.500 706.800h22" stroke="#666" stroke-width="3.800" fill="none"/></g>
</svg>
<div class="abs" style="left:970px;top:224px;width:38px;height:59px;border-radius:0 0 2px 2px;background:#0969b1"></div>
<svg class="i" style="left:984px;top:241px" width="14" height="26" viewBox="0 0 14 26"><path d="M1.400 2.400L12 13 1.400 23.600z" fill="none" stroke="#fff" stroke-width="2.200" stroke-linejoin="miter"/></svg>

<!-- ===== RIGHT PANEL ===== -->
<svg width="0" height="0" style="position:absolute"><defs>
 <symbol id="s-flag" viewBox="0 0 17 17" overflow="visible"><g class="g"><path d="M1 0.600v16M1 1.800h7.200v8.200H1M8.200 3.200h7.400v8.400H8.200"/></g></symbol>
 <symbol id="s-chk" viewBox="0 0 17 18" overflow="visible">
  <path d="M1 0.600v17" class="g"/><rect x="1" y="1" width="15.400" height="10" fill="#fff" stroke="#555" stroke-width="1"/>
  <g fill="#555"><rect x="1" y="1" width="2.600" height="2.500"/><rect x="6.200" y="1" width="2.600" height="2.500"/><rect x="11.400" y="1" width="2.600" height="2.500"/>
  <rect x="3.600" y="3.500" width="2.600" height="2.500"/><rect x="8.800" y="3.500" width="2.600" height="2.500"/><rect x="14" y="3.500" width="2.400" height="2.500"/>
  <rect x="1" y="6" width="2.600" height="2.500"/><rect x="6.200" y="6" width="2.600" height="2.500"/><rect x="11.400" y="6" width="2.600" height="2.500"/>
  <rect x="3.600" y="8.500" width="2.600" height="2.500"/><rect x="8.800" y="8.500" width="2.600" height="2.500"/><rect x="14" y="8.500" width="2.400" height="2.500"/></g></symbol>
 <symbol id="s-road" viewBox="0 0 23 14" overflow="visible"><g class="g"><path d="M5.400 0.800h12.200l4.400 12.400H1z" stroke-linejoin="miter"/><path d="M11.500 1.600v2.400M11.500 6v2.400M11.500 10.400v2.400" stroke-linecap="butt"/></g></symbol>
 <symbol id="s-pin" viewBox="0 0 14 19" overflow="visible"><g class="g"><path d="M7 18c-3.600-4.600-6-8-6-11a6 6 0 0 1 12 0c0 3-2.400 6.400-6 11z"/><circle cx="7" cy="6.800" r="1.500"/></g></symbol>
 <symbol id="s-car" viewBox="0 0 19 15" overflow="visible"><g class="g"><path d="M2.400 6l1.800-4.600h10.600L16.600 6M1 6h17v6H1zM1.400 12v2.400h3V12M14.600 12v2.400h3V12"/><path d="M3.400 8.600h2.400M13.200 8.600h2.400M6.400 12l.8-1.600h4.600l.8 1.600"/></g></symbol>
 <symbol id="s-user" viewBox="0 0 15 16" overflow="visible"><g class="g"><circle cx="7.500" cy="5.400" r="4.400"/><path d="M0.800 15.400c.4-3 2-4.800 4-5.600M14.200 15.400c-.4-3-2-4.800-4-5.600"/></g></symbol>
 <symbol id="s-cash" viewBox="0 0 21 13" overflow="visible"><rect x="0.800" y="0.800" width="19.400" height="11.400" class="g" stroke-linejoin="miter"/><circle cx="4.300" cy="6.500" r=".9" fill="#555"/><circle cx="16.700" cy="6.500" r=".9" fill="#555"/><path d="M9.200 5l1.700-1.100v5.600" class="g" stroke-width="1.500"/></symbol>
 <symbol id="s-check" viewBox="0 0 21 21" overflow="visible"><rect width="21" height="21" rx="2" fill="#2196f3"/><path d="M4.600 10.800l4 4 8-8.400" fill="none" stroke="#fff" stroke-width="2.300"/></symbol>
</defs></svg>

<!-- toggle button on map -->
<!-- filter pill -->
<div class="abs" style="left:1022px;top:234px;width:263px;height:30px;border-radius:15px;background:#eeeeee"></div>
<svg class="i" style="left:1048px;top:244px" width="10" height="11" viewBox="0 0 10 11"><path d="M0.600 0.600h8.800L6 5v4.200L4 10.400V5z" fill="none" stroke="#555" stroke-width="1.100" stroke-linejoin="round"/></svg>
<!-- blue section header -->
<div class="abs" style="left:1019px;top:274px;width:747px;height:71px;background:#0969b1"></div>
<svg class="i" style="left:1051px;top:299px" width="21" height="21"><use href="#s-check"/></svg>
<svg class="i" style="left:1726px;top:301px" width="14" height="9" viewBox="0 0 14 9"><path d="M1.200 7.600L7 1.800l5.800 5.800" fill="none" stroke="#fff" stroke-width="2.200"/></svg>

<!-- driver card 1 -->
<div class="abs" style="left:1020px;top:355px;width:745px;height:94px;border:1px solid #dcdcdc;border-radius:2px;background:#fff"></div>
<div class="abs" style="left:1021px;top:356px;width:743px;height:43px;background:#efefef"></div>
<svg class="i" style="left:1032px;top:366px" width="21" height="21"><use href="#s-check"/></svg>
<div class="abs circ" style="left:1063px;top:365px;width:24px;height:24px;background:#7fe0ae;border:1.500px solid #222"></div>
<div class="abs" style="left:1564px;top:366px;width:115px;height:22px;border-radius:3px;background:#fcefd6"></div>
<div class="abs" style="left:1717px;top:375px;width:17px;height:3px;background:radial-gradient(circle at 1.500px 1.500px,#222 1.300px,transparent 1.500px) 0 0/7px 3px repeat-x"></div>

<!-- driver card 2 -->
<div class="abs" style="left:1020px;top:460px;width:745px;height:95px;border:1px solid #dcdcdc;border-radius:2px;background:#fff"></div>
<div class="abs" style="left:1021px;top:461px;width:743px;height:43px;background:#efefef"></div>
<svg class="i" style="left:1032px;top:471px" width="21" height="21"><use href="#s-check"/></svg>
<div class="abs circ" style="left:1063px;top:470px;width:24px;height:24px;background:#6673e5;border:1.500px solid #222"></div>
<div class="abs" style="left:1564px;top:471px;width:115px;height:22px;border-radius:3px;background:#fcefd6"></div>
<div class="abs" style="left:1717px;top:480px;width:17px;height:3px;background:radial-gradient(circle at 1.500px 1.500px,#222 1.300px,transparent 1.500px) 0 0/7px 3px repeat-x"></div>

<!-- driver card 3 -->
<div class="abs" style="left:1020px;top:565px;width:745px;height:95px;border:1px solid #dcdcdc;border-radius:2px;background:#fff"></div>
<div class="abs" style="left:1021px;top:566px;width:743px;height:43px;background:#efefef"></div>
<div class="abs circ" style="left:1063px;top:575px;width:24px;height:24px;background:#b07df5;border:1.500px solid #222"></div>
<div class="abs" style="left:1649px;top:576px;width:105px;height:22px;border-radius:3px;background:#e2e0f6"></div>

<svg class="i" style="left:1049.0px;top:416.4px" width="16.2" height="16.5"><use href="#s-flag"/></svg>
<svg class="i" style="left:1156.7px;top:415.6px" width="16.5" height="17.2"><use href="#s-chk"/></svg>
<svg class="i" style="left:1250.0px;top:417.0px" width="22.8" height="14"><use href="#s-road"/></svg>
<svg class="i" style="left:1376.4px;top:414.8px" width="13.3" height="18.5"><use href="#s-pin"/></svg>
<svg class="i" style="left:1469.0px;top:416.7px" width="18.5" height="14.6"><use href="#s-car"/></svg>
<svg class="i" style="left:1578.3px;top:416.3px" width="15" height="15.4"><use href="#s-user"/></svg>
<svg class="i" style="left:1672.3px;top:417.3px" width="21" height="12.7"><use href="#s-cash"/></svg>
<svg class="i" style="left:1049.0px;top:521.4px" width="16.2" height="16.5"><use href="#s-flag"/></svg>
<svg class="i" style="left:1157.7px;top:520.6px" width="16.5" height="17.2"><use href="#s-chk"/></svg>
<svg class="i" style="left:1249.3px;top:522.0px" width="22.8" height="14"><use href="#s-road"/></svg>
<svg class="i" style="left:1377.3px;top:519.8px" width="13.3" height="18.5"><use href="#s-pin"/></svg>
<svg class="i" style="left:1468.9px;top:521.7px" width="18.5" height="14.6"><use href="#s-car"/></svg>
<svg class="i" style="left:1580.0px;top:521.3px" width="15" height="15.4"><use href="#s-user"/></svg>
<svg class="i" style="left:1673.3px;top:522.4px" width="21" height="12.7"><use href="#s-cash"/></svg>
<svg class="i" style="left:1051.9px;top:626.4px" width="16.2" height="16.5"><use href="#s-flag"/></svg>
<svg class="i" style="left:1158.6px;top:625.6px" width="16.5" height="17.2"><use href="#s-chk"/></svg>
<svg class="i" style="left:1257.0px;top:627.0px" width="22.8" height="14"><use href="#s-road"/></svg>
<svg class="i" style="left:1379.0px;top:624.8px" width="13.3" height="18.5"><use href="#s-pin"/></svg>
<svg class="i" style="left:1470.0px;top:626.7px" width="18.5" height="14.6"><use href="#s-car"/></svg>
<svg class="i" style="left:1579.0px;top:626.3px" width="15" height="15.4"><use href="#s-user"/></svg>
<svg class="i" style="left:1687.0px;top:627.4px" width="21" height="12.7"><use href="#s-cash"/></svg>
<span class="t" style="left:136.3px;top:107.1px;font-size:32px;font-weight:700;color:#1a1a1a;transform:scaleX(0.9141)">Ants</span>
<span class="t" style="left:201.1px;top:107.1px;font-size:32px;font-weight:400;color:#222;-webkit-text-stroke:.9px #fff;transform:scaleX(0.9462)">Route</span>
<span class="t" style="left:330.9px;top:105.7px;font-size:14.3px;font-weight:400;color:#2a2a2a;transform:scaleX(1.1039)">Site</span>
<span class="t" style="left:386.9px;top:105.7px;font-size:14.3px;font-weight:400;color:#2a2a2a;transform:scaleX(1.1078)">Nancy</span>
<span class="t" style="left:693.9px;top:105.7px;font-size:14.3px;font-weight:400;color:#2a2a2a;transform:scaleX(1.1480)">Planifier</span>
<span class="t" style="left:806.1px;top:105.7px;font-size:14.3px;font-weight:400;color:#3f93d2;transform:scaleX(1.1214)">Organiser</span>
<span class="t" style="left:929.7px;top:105.7px;font-size:14.3px;font-weight:400;color:#2a2a2a;transform:scaleX(1.0806)">Suivre</span>
<span class="t" style="left:1026.7px;top:105.7px;font-size:14.3px;font-weight:400;color:#2a2a2a;transform:scaleX(1.0930)">Analyser</span>
<span class="t" style="left:1267.1px;top:105.5px;font-size:14.3px;font-weight:400;color:#2a2a2a;transform:scaleX(1.1143)">Clients</span>
<span class="t" style="left:1369.3px;top:105.5px;font-size:14.3px;font-weight:400;color:#2a2a2a;transform:scaleX(1.0530)">Ressources</span>
<span class="t" style="left:1502.4px;top:105.7px;font-size:14.3px;font-weight:400;color:#2a2a2a;transform:scaleX(1.1122)">Paramètres</span>
<span class="t" style="left:1683.0px;top:92.5px;font-size:12.5px;font-weight:700;color:#fff;transform:scaleX(1.2584)">58</span>
<span class="t" style="left:1721.0px;top:105.6px;font-size:14.5px;font-weight:700;color:#fff;transform:scaleX(1.0637)">MH</span>
<span class="t" style="left:127.8px;top:268.5px;font-size:14.3px;font-weight:400;color:#2a2a2a;transform:scaleX(1.1535)">Planning</span>
<span class="t" style="left:127.8px;top:318.0px;font-size:14.3px;font-weight:400;color:#2a2a2a;transform:scaleX(1.1023)">Liste des tournées</span>
<span class="t" style="left:127.8px;top:367.7px;font-size:14.3px;font-weight:400;color:#3f93d2;transform:scaleX(1.1012)">Carte des tournées</span>
<span class="t" style="left:127.8px;top:417.0px;font-size:14.3px;font-weight:400;color:#2a2a2a;transform:scaleX(1.0913)">Liste des collectes</span>
<span class="t" style="left:382.5px;top:179.3px;font-size:20.5px;font-weight:400;color:#c9743c;transform:scaleX(1.0782)">Carte des tournées</span>
<span class="t" style="left:705.5px;top:179.0px;font-size:14px;font-weight:400;color:#333;transform:scaleX(1.0845)">13/02/2024</span>
<span class="t" style="left:1359.1px;top:178.3px;font-size:14.3px;font-weight:700;color:#fff;transform:scaleX(1.0371)">Ré-optimiser les tournées</span>
<span class="t" style="left:1069.9px;top:239.5px;font-size:14px;font-weight:400;color:#555;transform:scaleX(1.1527)">Voir les options d&#39;affichage</span>
<span class="t" style="left:1087.7px;top:299.3px;font-size:14.3px;font-weight:700;color:#fff;transform:scaleX(1.0232)">Chauffeurs hors secteur</span>
<span class="t" style="left:1096.0px;top:367.0px;font-size:14.8px;font-weight:400;color:#2a2a2a;transform:scaleX(1.0506)">Julia Fernandez | AS-987-WX</span>
<span class="t" style="left:1570.8px;top:367.0px;font-size:11.3px;font-weight:700;color:#f4b63f;transform:scaleX(1.0851)">NON DEMARREE</span>
<span class="t" style="left:1096.5px;top:472.0px;font-size:14.8px;font-weight:400;color:#2a2a2a;transform:scaleX(1.0500)">Paul Wagner | 76-UYG-09</span>
<span class="t" style="left:1570.8px;top:472.0px;font-size:11.3px;font-weight:700;color:#f4b63f;transform:scaleX(1.0851)">NON DEMARREE</span>
<span class="t" style="left:1096.5px;top:577.0px;font-size:14.8px;font-weight:400;color:#2a2a2a;transform:scaleX(1.0555)">Pierre Patel |</span>
<span class="t" style="left:1655.5px;top:577.0px;font-size:11.3px;font-weight:700;color:#5e52c8;transform:scaleX(1.0510)">NON SOLLICITE</span>
<span class="t" style="left:1069.1px;top:414.0px;font-size:12px;font-weight:400;color:#666;transform:scaleX(1.1188)">08:00</span>
<span class="t" style="left:1177.0px;top:414.0px;font-size:12px;font-weight:400;color:#666;transform:scaleX(1.0056)">23:34</span>
<span class="t" style="left:1277.7px;top:414.0px;font-size:12px;font-weight:400;color:#666;transform:scaleX(1.0495)">7,57 km</span>
<span class="t" style="left:1399.4px;top:414.0px;font-size:12px;font-weight:400;color:#666;transform:scaleX(1.0554)">29</span>
<span class="t" style="left:1494.8px;top:414.0px;font-size:12px;font-weight:400;color:#666;transform:scaleX(1.0983)">14min</span>
<span class="t" style="left:1602.0px;top:414.0px;font-size:12px;font-weight:400;color:#666;transform:scaleX(1.0007)">15h20</span>
<span class="t" style="left:1699.1px;top:414.0px;font-size:12px;font-weight:400;color:#666;transform:scaleX(1.0938)">349,28 €</span>
<span class="t" style="left:1069.1px;top:519.0px;font-size:12px;font-weight:400;color:#666;transform:scaleX(1.1188)">08:00</span>
<span class="t" style="left:1178.0px;top:519.0px;font-size:12px;font-weight:400;color:#666;transform:scaleX(0.9257)">16:53</span>
<span class="t" style="left:1276.5px;top:519.0px;font-size:12px;font-weight:400;color:#666;transform:scaleX(1.1057)">8,24 km</span>
<span class="t" style="left:1400.5px;top:519.0px;font-size:12px;font-weight:400;color:#666;transform:scaleX(0.8833)">16</span>
<span class="t" style="left:1494.3px;top:519.0px;font-size:12px;font-weight:400;color:#666;transform:scaleX(1.1013)">18min</span>
<span class="t" style="left:1603.6px;top:519.0px;font-size:12px;font-weight:400;color:#666;transform:scaleX(1.1197)">8h35</span>
<span class="t" style="left:1700.0px;top:519.0px;font-size:12px;font-weight:400;color:#666;transform:scaleX(1.0574)">140,67 €</span>
<span class="t" style="left:1072.1px;top:624.0px;font-size:12px;font-weight:400;color:#9a9a9a;transform:scaleX(1.0692)">-- : --</span>
<span class="t" style="left:1178.0px;top:624.0px;font-size:12px;font-weight:400;color:#9a9a9a;transform:scaleX(1.0692)">-- : --</span>
<span class="t" style="left:1284.7px;top:624.0px;font-size:12px;font-weight:400;color:#666;transform:scaleX(1.2031)">0 km</span>
<span class="t" style="left:1402.3px;top:624.0px;font-size:12px;font-weight:400;color:#666;transform:scaleX(1.3009)">0</span>
<span class="t" style="left:1496.5px;top:624.0px;font-size:12px;font-weight:400;color:#666;transform:scaleX(1.2300)">0min</span>
<span class="t" style="left:1602.8px;top:624.0px;font-size:12px;font-weight:400;color:#666;transform:scaleX(1.2185)">0min</span>
<span class="t" style="left:1713.8px;top:624.0px;font-size:12px;font-weight:400;color:#666;transform:scaleX(1.2824)">0 €</span>

</body></html>
